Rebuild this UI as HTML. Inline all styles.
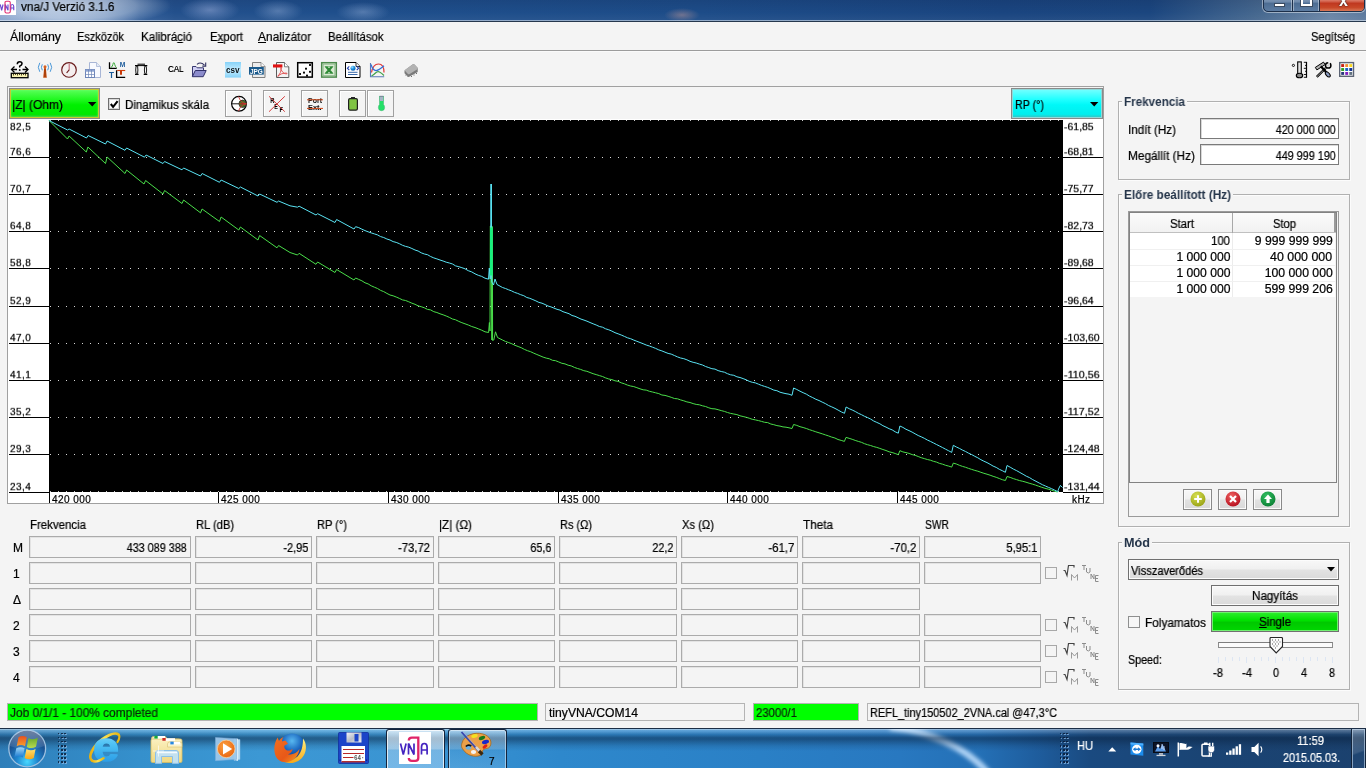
<!DOCTYPE html>
<html><head><meta charset="utf-8"><title>vna/J</title>
<style>
html,body{margin:0;padding:0;overflow:hidden;}body{width:1366px;height:768px;overflow:hidden;background:#f4f4f4;position:relative;font-family:"Liberation Sans",sans-serif;}
u{text-decoration:underline;text-underline-offset:1px;}
</style></head><body>
<div style="position:absolute;left:0px;top:0px;width:1366px;height:21px;background:linear-gradient(90deg,#8aa5cd 0px,#86a3cc 60px,#6286b8 105px,#305c98 140px,#23508c 175px,#1f4f8c 330px,#1d4c88 700px,#1a4580 1000px,#1b467f 1150px,#46688f 1260px,#6a85a6 1330px,#5d7a9e 1366px);"></div>
<div style="position:absolute;left:0px;top:0px;width:1366px;height:21px;background:linear-gradient(180deg,rgba(0,0,30,0.10),rgba(0,0,30,0) 60%,rgba(255,255,255,0.05));"></div>
<div style="position:absolute;left:-20px;top:-14px;width:190px;height:40px;background:radial-gradient(ellipse at center,rgba(255,255,255,0.50) 0%,rgba(255,255,255,0.32) 45%,rgba(255,255,255,0) 72%);"></div>
<div style="position:absolute;left:180px;top:-2px;width:60px;height:24px;background:radial-gradient(ellipse at center,rgba(150,170,215,0.55),rgba(150,170,215,0) 70%);"></div>
<div style="position:absolute;left:253px;top:0px;width:50px;height:22px;background:radial-gradient(ellipse at center,rgba(150,175,215,0.45),rgba(150,175,215,0) 70%);"></div>
<div style="position:absolute;left:336px;top:2px;width:54px;height:20px;background:radial-gradient(ellipse at center,rgba(150,175,215,0.45),rgba(150,175,215,0) 70%);"></div>
<div style="position:absolute;left:664px;top:8px;width:36px;height:14px;background:radial-gradient(ellipse at center,rgba(190,150,150,0.5),rgba(190,150,150,0) 70%);"></div>
<div style="position:absolute;left:0px;top:20px;width:1366px;height:1px;background:rgba(235,242,250,0.55);"></div>
<div style="position:absolute;left:0px;top:21px;width:1366px;height:1px;background:#26384e;"></div>
<div style="position:absolute;left:0px;top:0px;width:16px;height:14.7px;background:#fff;"></div>
<svg style="position:absolute;left:0;top:-0.8px" width="16" height="16" viewBox="0 0 32 32"><path d="M0.500 11l2.800 11.500 2.800-11.500M10.500 22.500v-11.500l5.500 11.500v-11.500M21.500 22.500v-7.500q0-4 3-4t3 4v7.500M21.500 18h6" fill="none" stroke="#6a48d0" stroke-width="2.300"/><path d="M10 7q0-2.500 3-2.500h4.500q3 0 3 2.500v18.500q0 2.500-3 2.500h-4.500q-3 0-3-2.500z" fill="none" stroke="#e02c70" stroke-width="2.200"/></svg>
<span id="t1" style='position:absolute;left:20.8px;top:0px;font:12px/15px "Liberation Sans",sans-serif;color:#000;white-space:nowrap;will-change:transform;transform-origin:left top;transform:scale(0.9791,1.000);-webkit-text-stroke:0.22px #000;'>vna/J Verzió 3.1.6</span>
<div style="position:absolute;left:1263px;top:-6px;width:102px;height:18px;border:1px solid #1c2f4a;border-radius:0 0 5px 5px;box-shadow:0 0 0 1px rgba(255,255,255,0.45);background:linear-gradient(180deg,#94a8c2,#6c88aa 45%,#4c6c92 50%,#5c7ca2);overflow:hidden;box-sizing:border-box;"></div>
<div style="position:absolute;left:1292px;top:-6px;width:1px;height:17px;background:#1c2f4a;box-shadow:1px 0 0 rgba(255,255,255,0.4),-1px 0 0 rgba(255,255,255,0.4);"></div>
<div style="position:absolute;left:1319px;top:-6px;width:1px;height:17px;background:#1c2f4a;box-shadow:-1px 0 0 rgba(255,255,255,0.4);"></div>
<div style="position:absolute;left:1320px;top:-6px;width:44px;height:17px;background:linear-gradient(180deg,#e8b0a0,#d8705c 40%,#c03820 55%,#c84828 80%,#d87858);border-radius:0 0 4px 0;"></div>
<div style="position:absolute;left:1273.5px;top:2.5px;width:11.5px;height:4px;background:#fff;border:1px solid #3a4a60;box-sizing:border-box;"></div>
<div style="position:absolute;left:1300.5px;top:-3px;width:11px;height:8.7px;border:2px solid #fff;outline:1px solid #3a4a60;box-sizing:border-box;"></div>
<span id="t2" style='position:absolute;left:1338.5px;top:-9px;font:bold 16px/19px "Liberation Sans",sans-serif;color:#fff;white-space:nowrap;will-change:transform;transform-origin:left top;transform:scale(1.0000,1.000);text-shadow:0 0 1px #3a2020,0 0 2px #3a2020;'>x</span>
<div style="position:absolute;left:0px;top:22px;width:1366px;height:28px;background:#f4f4f4;"></div>
<div style="position:absolute;left:0px;top:50px;width:1366px;height:1px;background:#9c9c9c;"></div>
<div style="position:absolute;left:0px;top:51px;width:1366px;height:1px;background:#fafafa;"></div>
<span id="t3" style='position:absolute;left:10px;top:30px;font:12px/15px "Liberation Sans",sans-serif;color:#000;white-space:nowrap;will-change:transform;transform-origin:left top;transform:scale(1.0332,1.000);-webkit-text-stroke:0.22px #000;'>Állomány</span>
<span id="t4" style='position:absolute;left:77px;top:30px;font:12px/15px "Liberation Sans",sans-serif;color:#000;white-space:nowrap;will-change:transform;transform-origin:left top;transform:scale(0.9151,1.000);-webkit-text-stroke:0.22px #000;'>Eszközök</span>
<span id="t5" style='position:absolute;left:140.5px;top:30px;font:12px/15px "Liberation Sans",sans-serif;color:#000;white-space:nowrap;will-change:transform;transform-origin:left top;transform:scale(0.9677,1.000);-webkit-text-stroke:0.22px #000;'>Kalibrá<u>c</u>ió</span>
<span id="t6" style='position:absolute;left:209.5px;top:30px;font:12px/15px "Liberation Sans",sans-serif;color:#000;white-space:nowrap;will-change:transform;transform-origin:left top;transform:scale(0.9509,1.000);-webkit-text-stroke:0.22px #000;'>E<u>x</u>port</span>
<span id="t7" style='position:absolute;left:258px;top:30px;font:12px/15px "Liberation Sans",sans-serif;color:#000;white-space:nowrap;will-change:transform;transform-origin:left top;transform:scale(0.9930,1.000);-webkit-text-stroke:0.22px #000;'><u>A</u>nalizátor</span>
<span id="t8" style='position:absolute;left:327.5px;top:30px;font:12px/15px "Liberation Sans",sans-serif;color:#000;white-space:nowrap;will-change:transform;transform-origin:left top;transform:scale(0.9454,1.000);-webkit-text-stroke:0.22px #000;'>Beállítások</span>
<span id="t9" style='position:absolute;left:1311px;top:30px;font:12px/15px "Liberation Sans",sans-serif;color:#000;white-space:nowrap;will-change:transform;transform-origin:left top;transform:scale(0.9288,1.000);-webkit-text-stroke:0.22px #000;'>Segítség</span>
<svg style="position:absolute;left:0;top:0;overflow:visible" width="1366" height="130" viewBox="0 0 1366 130"><path d="M11 70l9-9 8.500 9z" fill="#fafafa" opacity="0.800"/><path d="M12 69.500h5M22.500 69.500h5" stroke="#000" stroke-width="1.300"/><path d="M14.500 66.500l-3 3 3 3M25 66.500l3 3-3 3" stroke="#000" stroke-width="1.300" fill="none"/><path d="M17.300 64.200q0-2.400 2.400-2.400 2.300 0 2.300 1.900 0 1.300-2.300 2.400v1.300" stroke="#000" stroke-width="1.500" fill="none"/><rect x="18.900" y="69.200" width="1.600" height="1.700" fill="#000"/><rect x="11.300" y="73.300" width="16.700" height="4.400" fill="#f8f2b0" stroke="#000" stroke-width="1.300"/><path d="M13.500 73.500v2M15.500 73.500v1.500M17.500 73.500v2M19.500 73.500v1.500M21.500 73.500v2M23.500 73.500v1.500M25.500 73.500v2" stroke="#201800" stroke-width="0.800"/><path d="M44.200 67.500h1.600l1 10.200h-3.600z" fill="#c85010"/><circle cx="45" cy="66.800" r="1.500" fill="#d86020"/><path d="M45 69v8" stroke="#802800" stroke-width="0.700"/><path d="M42.300 64.300q-1.800 3 0 6M47.700 64.300q1.800 3 0 6" stroke="#4a98d8" stroke-width="1" fill="none"/><path d="M39.800 62.800q-3 4.500 0 9M50.200 62.800q3 4.500 0 9" stroke="#4a98d8" stroke-width="1" fill="none"/><circle cx="69" cy="69.900" r="7.300" fill="#f4eeee" stroke="#6a1c1c" stroke-width="1.150"/><path d="M69.200 63.500v6.400" stroke="#c06878" stroke-width="1.100"/><path d="M69.200 69.900l-2.600 3" stroke="#6a1c1c" stroke-width="1.100"/><path d="M89.500 62.500h7l4 4v11h-11z" fill="#f8faff" stroke="#a8b6d6" stroke-width="1"/><path d="M96.500 62.500v4h4" fill="#e4eaf6" stroke="#a8b6d6" stroke-width="0.800"/><rect x="85.500" y="69.500" width="9" height="8" fill="#fdfdff" stroke="#6f86b8" stroke-width="1"/><rect x="85.500" y="69.500" width="9" height="2.200" fill="#8ea4d2"/><path d="M88.500 69.500v8M91.500 69.500v8M85.500 74.500h9" stroke="#6f86b8" stroke-width="0.700"/><path d="M109.500 62.300v6h7.200" stroke="#000" stroke-width="1.300" fill="none"/><path d="M110.700 67.600q1.600-0.300 2.200-3.200 0.800-3.600 1.800 0 0.600 2.900 2 3.200" stroke="#38a838" stroke-width="1" fill="none"/><text x="119.700" y="66.700" font-family="Liberation Sans" font-size="6.800" font-weight="bold" fill="#1a5a9a" textLength="5.600" lengthAdjust="spacingAndGlyphs">M</text><text x="109" y="77.600" font-family="Liberation Sans" font-size="8.200" font-weight="bold" fill="#1a5a9a">T</text><path d="M116.600 70.200v7.200h8.600" stroke="#000" stroke-width="1.300" fill="none"/><path d="M117.200 70.500h8" stroke="#d04010" stroke-width="1.100"/><path d="M121 70.500v4.200" stroke="#c83808" stroke-width="2"/><path d="M137.500 64.200h7.500M136 65.600h10.500" stroke="#000" stroke-width="1"/><path d="M135 65.600h3.600M143.700 65.600h3.600M135 74.400h3.600M143.700 74.400h3.600" stroke="#000" stroke-width="1.200"/><ellipse cx="136.800" cy="70" rx="1.100" ry="4.200" fill="none" stroke="#000" stroke-width="0.900"/><ellipse cx="145.500" cy="70" rx="1.100" ry="4.200" fill="none" stroke="#000" stroke-width="0.900"/><path d="M192.500 76.500v-10h3.500l1.200 1.300h6.300v3" fill="#d0d0f4" stroke="#383870" stroke-width="1"/><path d="M192.300 76.700l3-6.200h10.900l-3 6.200z" fill="#8c8ccc" stroke="#303068" stroke-width="1"/><path d="M197 64.300q3.500-3 7.500 0.800" stroke="#303060" stroke-width="1.100" fill="none"/><path d="M205.700 62.500v3.600h-3.400" stroke="#303060" stroke-width="1.100" fill="none"/><defs><linearGradient id="csvg" x1="0" y1="0" x2="0" y2="1"><stop offset="0" stop-color="#86d2f8"/><stop offset="0.500" stop-color="#c4ecff"/><stop offset="1" stop-color="#86d2f8"/></linearGradient></defs><rect x="225" y="62" width="16" height="15.600" fill="url(#csvg)"/><text x="226" y="73.200" font-family="Liberation Sans" font-size="9.800" font-weight="bold" fill="#0c1418" textLength="13.600" lengthAdjust="spacingAndGlyphs">csv</text><path d="M252.500 62.500h8.500l4 4v11h-12.500z" fill="#ececec" stroke="#808080" stroke-width="1"/><path d="M261 62.500v4h4" fill="#fafafa" stroke="#808080" stroke-width="0.800"/><rect x="249" y="67" width="14.800" height="7.600" fill="#1a5a8c"/><text x="250" y="73.700" font-family="Liberation Sans" font-size="7.400" font-weight="bold" fill="#fff" textLength="12.800" lengthAdjust="spacingAndGlyphs">JPG</text><path d="M276.500 62.500h8l4.300 4.300v10.700h-12.300z" fill="#f4f4f4" stroke="#5c5c5c" stroke-width="1"/><path d="M284.500 62.500v4.300h4.300" fill="#fff" stroke="#5c5c5c" stroke-width="0.800"/><rect x="273" y="64.400" width="9.400" height="3.100" fill="#e01010"/><path d="M278 76.500q3.200-4 3.400-8.500 0.100-1.600-0.700-0.600-0.400 2 2.200 5 2 1.800 4 1.500 0.800-0.700-1-0.900-4.200 0-8 2.800z" stroke="#e05050" stroke-width="0.900" fill="none"/><rect x="297.700" y="62.700" width="14.600" height="14.400" fill="#fff" stroke="#000" stroke-width="1.500"/><rect x="309.05" y="64.05" width="1.900" height="1.900" fill="#000"/><rect x="305.05" y="67.75" width="1.900" height="1.900" fill="#000"/><rect x="309.05" y="70.85" width="1.900" height="1.900" fill="#000"/><rect x="303.05" y="71.65" width="1.900" height="1.900" fill="#000"/><rect x="299.05" y="73.05" width="1.900" height="1.900" fill="#000"/><rect x="306.05" y="74.65" width="1.900" height="1.900" fill="#000"/><rect x="321.700" y="62.700" width="14.600" height="14.400" fill="#dcecd4" stroke="#4c8a4c" stroke-width="1.500"/><rect x="323.200" y="64.200" width="11.600" height="11.400" fill="none" stroke="#8cb88c" stroke-width="0.800"/><path d="M324.500 66.500h3l6 7h-3zM330.500 66.500h3l-6 7h-3z" fill="#2e8a36"/><path d="M325 66.500h8M325 73.500h8" stroke="#2e8a36" stroke-width="0.700" opacity="0.700"/><path d="M345.500 62.500h10.500l4 4v11h-14.500z" fill="#fff" stroke="#000" stroke-width="1"/><path d="M356 62.500v4h4" fill="#f0f0f0" stroke="#000" stroke-width="0.800"/><defs><radialGradient id="glb" cx="0.350" cy="0.300" r="0.800"><stop offset="0" stop-color="#a0e0ff"/><stop offset="0.500" stop-color="#1890e0"/><stop offset="1" stop-color="#0c58a8"/></radialGradient></defs><circle cx="353" cy="68.200" r="2.500" fill="url(#glb)"/><path d="M349.300 66.300l-1.900 1.900 1.900 1.900M356.700 66.300l1.900 1.900-1.900 1.900" stroke="#2040b0" stroke-width="1.100" fill="none"/><path d="M348 72.300h9.500M348 74.500h9.500" stroke="#3a68a8" stroke-width="1"/><path d="M370.500 63v13.800h13.700" stroke="#5a7ab8" stroke-width="1.100" fill="none"/><path d="M371.500 72.500q1.500-8.500 7-8.500t5.500 8.500" stroke="#e03838" stroke-width="1.200" fill="none"/><path d="M371 64.500q2 6.100 5 6.100 2.500 0 8-4.800" stroke="#3070d8" stroke-width="1.200" fill="none"/><path d="M371.500 76q2-1 4-3t4-1 4.500 3.500" stroke="#40a048" stroke-width="1.200" fill="none"/><path d="M404.500 70.500l8-6q1-0.700 2 0l3.200 3.500q0.600 0.800 0 1.600v2.400l-8 4.600q-1 0.500-2-0.400l-3.200-3z" fill="#7a7a7a"/><path d="M404.500 70.300l8-5.800q1-0.700 2 0l3.200 3.300q0.600 0.800-0.300 1.400l-7.800 4.800q-1 0.600-1.900-0.300z" fill="#b2b2b2"/><path d="M406 74.500v1.200M408 76v1M411.500 76v1M414 74.500v1M416.500 73v1" stroke="#606060" stroke-width="0.900"/><circle cx="1293.400" cy="65.400" r="1.100" fill="none" stroke="#000" stroke-width="0.900"/><rect x="1297.700" y="61.900" width="3.600" height="12.500" fill="#e4e4e4" stroke="#000" stroke-width="1.100"/><ellipse cx="1299.500" cy="75.500" rx="3.200" ry="2.300" fill="#8c8c8c" stroke="#000" stroke-width="1.100"/><path d="M1306.500 61.900v15.800" stroke="#000" stroke-width="1.200"/><path d="M1303.800 62.300h2.700M1305 65.400h1.500M1303.800 68.300h2.700M1305 71.300h1.500M1303.800 74.500h2.700M1303.800 77.300h2.700" stroke="#000" stroke-width="0.900"/><path d="M1316.800 76.800l9-8.800" stroke="#000" stroke-width="2.400"/><path d="M1317 76.600l9-8.800" stroke="#c8c8c8" stroke-width="0.800"/><circle cx="1328.200" cy="65.400" r="2.700" fill="none" stroke="#000" stroke-width="1.500"/><path d="M1328.400 63.600l2.600-2.600" stroke="#f4f4f4" stroke-width="1.800"/><circle cx="1328.200" cy="65.400" r="1.200" fill="#d0d0d0"/><path d="M1315.300 67.400l8.200-5.300 1.600 2.500-8.200 5.300z" fill="#b4b4b4" stroke="#000" stroke-width="1"/><path d="M1320.800 66.300l8.200 9" stroke="#000" stroke-width="2.200"/><ellipse cx="1327.800" cy="74.400" rx="3.100" ry="1.700" fill="#8c9cc0" stroke="#000" stroke-width="1" transform="rotate(47 1327.800 74.400)"/><rect x="1339.700" y="62.600" width="13.800" height="13.700" fill="#fff" stroke="#5c6474" stroke-width="1.400"/><rect x="1341.2" y="64.1" width="2.900" height="2.900" fill="#c82010"/><rect x="1345.25" y="64.1" width="2.900" height="2.900" fill="#f09030"/><rect x="1349.3" y="64.1" width="2.900" height="2.900" fill="#f8d820"/><rect x="1341.2" y="68.05" width="2.900" height="2.900" fill="#30a020"/><rect x="1345.25" y="68.05" width="2.900" height="2.900" fill="#1060c0"/><rect x="1349.3" y="68.05" width="2.900" height="2.900" fill="#103090"/><rect x="1341.2" y="72" width="2.900" height="2.900" fill="#283878"/><rect x="1345.25" y="72" width="2.900" height="2.900" fill="#8020c0"/><rect x="1349.3" y="72" width="2.900" height="2.900" fill="#607080"/></svg>
<span id="t10" style='position:absolute;left:167.6px;top:63px;font:9px/12px "Liberation Sans",sans-serif;color:#000;white-space:nowrap;will-change:transform;transform-origin:left top;transform:scale(0.8906,1.000);text-shadow:0 0 0.3px #000;'>CAL</span>
<div style="position:absolute;left:7px;top:86px;width:1095px;height:416px;background:#fff;border:1px solid #a0a0a0;box-sizing:content-box;"></div>
<div style="position:absolute;left:8px;top:87px;width:1095px;height:32px;background:#f4f4f4;"></div>
<div style="position:absolute;left:49px;top:120px;width:1014px;height:372px;background:#000;"></div>
<svg style="position:absolute;left:0;top:0" width="1366" height="768" viewBox="0 0 1366 768"><line x1="50" y1="120.5" x2="1063" y2="120.5" stroke="#c8c8c8" stroke-width="1" stroke-dasharray="1 7"/><line x1="50" y1="157.5" x2="1063" y2="157.5" stroke="#d8d8d8" stroke-width="1" stroke-dasharray="1 7"/><line x1="50" y1="194.5" x2="1063" y2="194.5" stroke="#d8d8d8" stroke-width="1" stroke-dasharray="1 7"/><line x1="50" y1="231.5" x2="1063" y2="231.5" stroke="#d8d8d8" stroke-width="1" stroke-dasharray="1 7"/><line x1="50" y1="268.5" x2="1063" y2="268.5" stroke="#d8d8d8" stroke-width="1" stroke-dasharray="1 7"/><line x1="50" y1="306.5" x2="1063" y2="306.5" stroke="#d8d8d8" stroke-width="1" stroke-dasharray="1 7"/><line x1="50" y1="343.5" x2="1063" y2="343.5" stroke="#d8d8d8" stroke-width="1" stroke-dasharray="1 7"/><line x1="50" y1="380.5" x2="1063" y2="380.5" stroke="#d8d8d8" stroke-width="1" stroke-dasharray="1 7"/><line x1="50" y1="417.5" x2="1063" y2="417.5" stroke="#d8d8d8" stroke-width="1" stroke-dasharray="1 7"/><line x1="50" y1="454.5" x2="1063" y2="454.5" stroke="#d8d8d8" stroke-width="1" stroke-dasharray="1 7"/><line x1="50" y1="491.5" x2="1063" y2="491.5" stroke="#c8c8c8" stroke-width="1" stroke-dasharray="1 7"/><line x1="9" y1="157.5" x2="49" y2="157.5" stroke="#000" stroke-width="1"/><line x1="1063" y1="157.5" x2="1103" y2="157.5" stroke="#000" stroke-width="1"/><line x1="9" y1="194.5" x2="49" y2="194.5" stroke="#000" stroke-width="1"/><line x1="1063" y1="194.5" x2="1103" y2="194.5" stroke="#000" stroke-width="1"/><line x1="9" y1="231.5" x2="49" y2="231.5" stroke="#000" stroke-width="1"/><line x1="1063" y1="231.5" x2="1103" y2="231.5" stroke="#000" stroke-width="1"/><line x1="9" y1="268.5" x2="49" y2="268.5" stroke="#000" stroke-width="1"/><line x1="1063" y1="268.5" x2="1103" y2="268.5" stroke="#000" stroke-width="1"/><line x1="9" y1="306.5" x2="49" y2="306.5" stroke="#000" stroke-width="1"/><line x1="1063" y1="306.5" x2="1103" y2="306.5" stroke="#000" stroke-width="1"/><line x1="9" y1="343.5" x2="49" y2="343.5" stroke="#000" stroke-width="1"/><line x1="1063" y1="343.5" x2="1103" y2="343.5" stroke="#000" stroke-width="1"/><line x1="9" y1="380.5" x2="49" y2="380.5" stroke="#000" stroke-width="1"/><line x1="1063" y1="380.5" x2="1103" y2="380.5" stroke="#000" stroke-width="1"/><line x1="9" y1="417.5" x2="49" y2="417.5" stroke="#000" stroke-width="1"/><line x1="1063" y1="417.5" x2="1103" y2="417.5" stroke="#000" stroke-width="1"/><line x1="9" y1="454.5" x2="49" y2="454.5" stroke="#000" stroke-width="1"/><line x1="1063" y1="454.5" x2="1103" y2="454.5" stroke="#000" stroke-width="1"/><line x1="9" y1="492.5" x2="49" y2="492.5" stroke="#000" stroke-width="1"/><line x1="1063" y1="492.5" x2="1103" y2="492.5" stroke="#000" stroke-width="1"/><line x1="49.5" y1="492" x2="49.5" y2="503" stroke="#000" stroke-width="1"/><line x1="218.5" y1="492" x2="218.5" y2="503" stroke="#000" stroke-width="1"/><line x1="388.5" y1="492" x2="388.5" y2="503" stroke="#000" stroke-width="1"/><line x1="558.5" y1="492" x2="558.5" y2="503" stroke="#000" stroke-width="1"/><line x1="727.5" y1="492" x2="727.5" y2="503" stroke="#000" stroke-width="1"/><line x1="897.5" y1="492" x2="897.5" y2="503" stroke="#000" stroke-width="1"/><path d="M49.0 120.5 L67.5 139.0 L69.1 136.0 L86.3 152.0 L87.9 147.0 L105.5 163.5 L107.1 157.0 L125.0 173.5 L126.6 170.0 L144.0 184.0 L145.6 180.5 L163.0 194.0 L164.6 190.5 L182.0 203.5 L183.6 200.0 L200.5 212.8 L202.1 209.0 L219.5 221.5 L221.1 217.0 L238.8 230.0 L240.4 227.0 L258.0 240.0 L259.6 235.5 L277.0 247.8 L278.6 245.5 L290.0 252.5 L297.5 255.0 L299.1 253.3 L316.0 264.3 L317.6 262.0 L335.0 272.5 L336.6 269.5 L354.0 280.0 L355.6 278.0 L358.7 279.4 L361.9 280.8 L365.0 282.8 L368.1 283.9 L371.2 285.8 L374.4 287.2 L377.5 288.5 L380.6 290.4 L383.7 291.6 L386.9 293.4 L390.0 295.0 L393.1 295.8 L396.2 297.0 L399.4 298.4 L402.5 299.9 L405.6 300.5 L408.8 301.8 L411.9 303.2 L415.0 304.3 L418.1 305.8 L421.2 306.7 L424.4 307.8 L427.5 309.4 L430.6 309.9 L433.8 311.7 L436.9 312.5 L440.0 313.8 L443.1 314.8 L446.2 316.0 L449.4 317.4 L452.5 319.0 L455.6 319.8 L458.8 321.4 L461.9 322.7 L465.0 323.8 L468.3 325.0 L471.7 326.5 L475.0 327.5 L478.3 328.8 L481.7 330.2 L485.0 331.8 L488.6 332.5 L489.4 322.5 L490.0 331.0 L490.3 226.0 L490.8 226.0 L491.9 340.0 L492.3 226.5 L492.6 340.5 L493.8 340.0 L495.5 331.8 L497.5 337.5 L502.5 340.0 L505.6 341.5 L508.8 342.6 L511.9 343.8 L515.0 345.3 L518.1 346.5 L521.2 347.7 L524.4 349.4 L527.5 350.7 L530.6 351.7 L533.8 353.2 L536.9 354.5 L540.0 355.8 L543.1 357.1 L546.2 358.1 L549.4 358.8 L552.5 360.3 L555.6 360.7 L558.8 362.0 L561.9 363.3 L565.0 363.9 L568.1 365.2 L571.2 365.9 L574.4 367.4 L577.5 368.5 L580.6 369.4 L583.8 370.7 L586.9 371.3 L590.0 372.5 L593.1 373.7 L596.2 374.6 L599.4 375.6 L602.5 376.5 L605.6 377.9 L608.8 379.0 L611.9 379.6 L615.0 380.8 L618.1 381.3 L621.2 382.8 L624.4 383.8 L627.5 385.1 L630.6 386.0 L633.8 386.6 L636.9 387.7 L640.0 388.8 L643.1 389.8 L646.2 390.1 L649.4 391.3 L652.5 392.0 L655.6 392.8 L658.8 393.6 L661.9 395.0 L665.0 395.4 L668.1 396.3 L671.2 397.3 L674.4 398.5 L677.5 398.8 L680.6 399.9 L683.8 400.8 L686.9 401.9 L690.0 402.5 L693.1 403.6 L696.2 404.4 L699.4 404.8 L702.5 405.8 L705.6 406.5 L708.8 407.8 L711.9 408.7 L715.0 408.9 L718.1 409.7 L721.2 410.6 L724.4 411.4 L727.5 412.5 L730.6 413.4 L733.8 414.0 L736.9 414.6 L740.0 415.8 L743.1 416.5 L746.2 417.3 L749.2 418.2 L752.3 419.3 L755.4 419.9 L758.5 420.6 L761.5 421.4 L764.6 422.3 L767.7 422.6 L770.8 424.0 L773.8 424.7 L776.9 425.6 L780.0 426.1 L783.0 426.9 L786.0 427.2 L789.0 427.8 L792.0 428.5 L793.6 424.5 L796.8 425.4 L800.0 426.7 L803.1 427.5 L806.3 428.5 L809.5 429.7 L812.6 430.7 L815.8 431.8 L819.0 432.8 L822.2 433.8 L825.4 434.9 L828.5 435.9 L831.7 437.1 L834.9 438.0 L838.0 439.5 L841.2 440.4 L844.4 441.4 L846.0 437.4 L849.1 438.3 L852.2 439.3 L855.2 440.4 L858.3 441.4 L861.4 442.3 L864.5 443.7 L867.5 444.7 L870.6 445.5 L873.7 446.6 L876.8 447.4 L879.8 448.4 L882.9 449.5 L886.0 450.5 L889.1 451.8 L892.1 452.5 L895.2 453.5 L898.3 454.7 L899.9 450.7 L902.9 451.9 L906.0 452.6 L909.0 453.4 L912.1 454.6 L915.1 455.3 L918.2 456.5 L921.2 457.7 L924.3 458.6 L927.3 459.5 L930.4 460.2 L933.4 461.3 L936.5 462.1 L939.5 463.4 L942.6 464.2 L945.6 465.3 L948.7 466.1 L951.7 467.1 L953.3 463.1 L956.4 464.0 L959.4 465.3 L962.5 466.4 L965.6 467.3 L968.6 468.4 L971.7 469.4 L974.8 470.4 L977.8 471.2 L980.9 472.3 L983.9 473.3 L987.0 474.2 L990.1 475.2 L993.1 476.3 L996.2 477.3 L999.3 478.5 L1002.3 479.7 L1005.4 480.5 L1007.0 476.5 L1010.2 477.4 L1013.3 478.6 L1016.5 479.6 L1019.6 480.6 L1022.8 481.3 L1026.0 482.2 L1029.1 483.2 L1032.3 484.1 L1035.5 485.1 L1038.6 486.2 L1041.8 487.3 L1044.9 488.3 L1048.1 489.1 L1051.3 490.1 L1054.4 491.2 L1057.6 492.0" fill="none" stroke="#4ade4a" stroke-width="1" stroke-linejoin="round"/><path d="M49.0 120.5 L67.5 130.0 L69.1 129.0 L86.5 138.0 L88.1 135.5 L105.5 144.0 L107.1 141.0 L125.0 150.3 L126.6 148.0 L144.5 157.2 L146.1 155.0 L163.0 163.5 L164.6 161.5 L182.0 169.8 L183.6 168.0 L200.5 176.0 L202.1 173.5 L219.5 182.3 L221.1 180.0 L238.8 188.5 L240.4 187.0 L258.0 196.0 L259.6 194.0 L277.0 202.3 L278.6 201.0 L290.0 205.8 L297.5 207.2 L299.1 206.2 L316.0 215.0 L317.6 213.7 L335.0 222.5 L336.6 219.5 L354.0 229.0 L355.6 226.7 L358.7 227.6 L361.9 229.2 L365.0 230.6 L368.1 231.8 L371.2 232.9 L374.4 233.9 L377.5 234.9 L380.6 236.6 L383.7 237.5 L386.9 239.0 L390.0 240.0 L393.1 241.6 L396.2 242.4 L399.4 243.7 L402.5 245.3 L405.6 246.4 L408.8 247.2 L411.9 248.5 L415.0 250.0 L418.1 251.0 L421.2 252.8 L424.4 254.0 L427.5 254.7 L430.6 256.5 L433.8 257.9 L436.9 258.9 L440.0 260.0 L443.1 261.0 L446.2 262.2 L449.4 263.0 L452.5 264.0 L455.6 265.9 L458.8 266.7 L461.9 267.7 L465.0 268.8 L468.3 270.7 L471.7 271.9 L475.0 273.8 L478.3 275.3 L481.7 276.4 L485.0 278.2 L488.5 279.2 L489.3 268.0 L490.2 279.0 L490.9 240.0 L491.0 184.0 L491.1 240.0 L491.8 282.0 L493.5 285.0 L495.0 279.0 L497.0 284.5 L502.5 287.5 L505.5 288.5 L508.6 289.8 L511.6 290.9 L514.6 292.4 L517.7 293.4 L520.7 294.7 L523.8 295.7 L526.8 297.5 L529.8 298.3 L532.9 299.6 L535.9 300.9 L538.9 302.4 L542.0 303.2 L545.0 304.5 L548.0 306.0 L551.0 306.9 L554.0 308.1 L557.0 309.3 L560.0 310.1 L563.0 311.7 L566.0 312.7 L569.0 313.7 L572.0 315.5 L575.0 316.3 L578.0 317.7 L581.0 319.1 L584.0 320.1 L587.0 321.2 L590.0 322.5 L593.1 323.8 L596.2 325.0 L599.4 326.5 L602.5 327.2 L605.6 328.8 L608.8 329.8 L611.9 331.1 L615.0 332.7 L618.1 333.8 L621.2 335.0 L624.4 336.4 L627.5 337.8 L630.6 338.7 L633.8 340.1 L636.9 341.3 L640.0 342.5 L643.1 343.7 L646.2 345.0 L649.4 346.0 L652.5 347.2 L655.6 348.4 L658.8 349.9 L661.9 350.9 L665.0 352.2 L668.1 353.4 L671.2 354.1 L674.4 355.5 L677.5 356.9 L680.6 358.0 L683.8 358.7 L686.9 359.8 L690.0 361.3 L693.1 362.3 L696.2 363.0 L699.4 364.1 L702.5 365.0 L705.6 366.5 L708.8 367.6 L711.9 368.7 L715.0 369.1 L718.1 370.6 L721.2 371.5 L724.4 372.2 L727.5 373.7 L730.6 374.8 L733.8 375.3 L736.9 376.8 L740.0 377.5 L743.1 378.6 L746.2 379.8 L749.2 381.3 L752.3 382.3 L755.4 382.9 L758.5 384.2 L761.5 385.4 L764.6 386.4 L767.7 387.4 L770.8 388.7 L773.8 390.1 L776.9 390.7 L780.0 392.2 L783.0 393.0 L786.0 393.7 L789.0 394.2 L792.0 395.3 L793.6 388.0 L796.8 389.5 L800.0 391.2 L803.1 392.7 L806.3 394.1 L809.5 396.1 L812.7 397.6 L815.9 399.3 L819.0 400.5 L822.2 402.1 L825.4 403.6 L828.6 405.5 L831.8 406.9 L835.0 408.4 L838.1 410.1 L841.3 411.9 L844.5 413.3 L846.1 407.0 L849.2 408.7 L852.2 410.0 L855.3 411.5 L858.4 413.3 L861.5 414.7 L864.5 416.3 L867.6 417.6 L870.7 419.1 L873.7 421.0 L876.8 422.4 L879.9 423.8 L882.9 425.7 L886.0 427.1 L889.1 428.7 L892.2 429.9 L895.2 431.8 L898.3 433.2 L899.9 426.0 L902.9 427.4 L906.0 429.3 L909.0 430.6 L912.1 432.1 L915.1 433.8 L918.2 435.5 L921.2 436.8 L924.3 438.3 L927.3 440.0 L930.4 441.4 L933.4 442.9 L936.5 444.5 L939.5 446.0 L942.6 447.6 L945.6 449.2 L948.7 450.8 L951.7 452.4 L953.3 445.3 L956.4 447.0 L959.4 448.4 L962.5 450.1 L965.6 451.5 L968.6 453.2 L971.7 454.6 L974.8 456.3 L977.8 457.8 L980.9 459.7 L983.9 461.2 L987.0 462.6 L990.1 464.3 L993.1 466.1 L996.2 467.4 L999.3 469.3 L1002.3 470.7 L1005.4 472.3 L1007.0 465.5 L1010.2 467.2 L1013.4 469.1 L1016.7 470.7 L1019.9 472.5 L1023.1 474.3 L1026.3 476.2 L1029.5 477.6 L1032.7 479.6 L1036.0 481.3 L1039.2 483.0 L1042.4 484.7 L1045.4 486.0 L1048.5 487.4 L1051.5 488.6 L1054.6 490.1 L1057.6 491.6 L1059.0 488.0 L1060.4 485.4 L1062.5 487.5" fill="none" stroke="#5ae4f4" stroke-width="1" stroke-linejoin="round"/><rect x="491" y="184" width="1" height="44" fill="#58e0f0"/><rect x="490" y="227.5" width="2.7" height="48" fill="#18f080"/></svg>
<span id="t11" style='position:absolute;left:10px;top:120px;font:10px/13px "Liberation Sans",sans-serif;color:#000;white-space:nowrap;will-change:transform;transform-origin:left bottom;transform:scale(1.0000,0.930);-webkit-text-stroke:0.22px #000;letter-spacing:0.44px;'>82,5</span>
<span id="t12" style='position:absolute;left:1064px;top:120px;font:10px/13px "Liberation Sans",sans-serif;color:#000;white-space:nowrap;will-change:transform;transform-origin:left bottom;transform:scale(1.0437,0.930);-webkit-text-stroke:0.22px #000;'>-61,85</span>
<span id="t13" style='position:absolute;left:10px;top:145px;font:10px/13px "Liberation Sans",sans-serif;color:#000;white-space:nowrap;will-change:transform;transform-origin:left bottom;transform:scale(1.0000,0.930);-webkit-text-stroke:0.22px #000;letter-spacing:0.44px;'>76,6</span>
<span id="t14" style='position:absolute;left:1064px;top:145px;font:10px/13px "Liberation Sans",sans-serif;color:#000;white-space:nowrap;will-change:transform;transform-origin:left bottom;transform:scale(1.0437,0.930);-webkit-text-stroke:0.22px #000;'>-68,81</span>
<span id="t15" style='position:absolute;left:10px;top:182px;font:10px/13px "Liberation Sans",sans-serif;color:#000;white-space:nowrap;will-change:transform;transform-origin:left bottom;transform:scale(1.0000,0.930);-webkit-text-stroke:0.22px #000;letter-spacing:0.44px;'>70,7</span>
<span id="t16" style='position:absolute;left:1064px;top:182px;font:10px/13px "Liberation Sans",sans-serif;color:#000;white-space:nowrap;will-change:transform;transform-origin:left bottom;transform:scale(1.0437,0.930);-webkit-text-stroke:0.22px #000;'>-75,77</span>
<span id="t17" style='position:absolute;left:10px;top:219px;font:10px/13px "Liberation Sans",sans-serif;color:#000;white-space:nowrap;will-change:transform;transform-origin:left bottom;transform:scale(1.0000,0.930);-webkit-text-stroke:0.22px #000;letter-spacing:0.44px;'>64,8</span>
<span id="t18" style='position:absolute;left:1064px;top:219px;font:10px/13px "Liberation Sans",sans-serif;color:#000;white-space:nowrap;will-change:transform;transform-origin:left bottom;transform:scale(1.0437,0.930);-webkit-text-stroke:0.22px #000;'>-82,73</span>
<span id="t19" style='position:absolute;left:10px;top:256px;font:10px/13px "Liberation Sans",sans-serif;color:#000;white-space:nowrap;will-change:transform;transform-origin:left bottom;transform:scale(1.0000,0.930);-webkit-text-stroke:0.22px #000;letter-spacing:0.44px;'>58,8</span>
<span id="t20" style='position:absolute;left:1064px;top:256px;font:10px/13px "Liberation Sans",sans-serif;color:#000;white-space:nowrap;will-change:transform;transform-origin:left bottom;transform:scale(1.0437,0.930);-webkit-text-stroke:0.22px #000;'>-89,68</span>
<span id="t21" style='position:absolute;left:10px;top:294px;font:10px/13px "Liberation Sans",sans-serif;color:#000;white-space:nowrap;will-change:transform;transform-origin:left bottom;transform:scale(1.0000,0.930);-webkit-text-stroke:0.22px #000;letter-spacing:0.44px;'>52,9</span>
<span id="t22" style='position:absolute;left:1064px;top:294px;font:10px/13px "Liberation Sans",sans-serif;color:#000;white-space:nowrap;will-change:transform;transform-origin:left bottom;transform:scale(1.0437,0.930);-webkit-text-stroke:0.22px #000;'>-96,64</span>
<span id="t23" style='position:absolute;left:10px;top:331px;font:10px/13px "Liberation Sans",sans-serif;color:#000;white-space:nowrap;will-change:transform;transform-origin:left bottom;transform:scale(1.0000,0.930);-webkit-text-stroke:0.22px #000;letter-spacing:0.44px;'>47,0</span>
<span id="t24" style='position:absolute;left:1064px;top:331px;font:10px/13px "Liberation Sans",sans-serif;color:#000;white-space:nowrap;will-change:transform;transform-origin:left bottom;transform:scale(1.0495,0.930);-webkit-text-stroke:0.22px #000;'>-103,60</span>
<span id="t25" style='position:absolute;left:10px;top:368px;font:10px/13px "Liberation Sans",sans-serif;color:#000;white-space:nowrap;will-change:transform;transform-origin:left bottom;transform:scale(1.0000,0.930);-webkit-text-stroke:0.22px #000;letter-spacing:0.44px;'>41,1</span>
<span id="t26" style='position:absolute;left:1064px;top:368px;font:10px/13px "Liberation Sans",sans-serif;color:#000;white-space:nowrap;will-change:transform;transform-origin:left bottom;transform:scale(1.0727,0.930);-webkit-text-stroke:0.22px #000;'>-110,56</span>
<span id="t27" style='position:absolute;left:10px;top:405px;font:10px/13px "Liberation Sans",sans-serif;color:#000;white-space:nowrap;will-change:transform;transform-origin:left bottom;transform:scale(1.0000,0.930);-webkit-text-stroke:0.22px #000;letter-spacing:0.44px;'>35,2</span>
<span id="t28" style='position:absolute;left:1064px;top:405px;font:10px/13px "Liberation Sans",sans-serif;color:#000;white-space:nowrap;will-change:transform;transform-origin:left bottom;transform:scale(1.0727,0.930);-webkit-text-stroke:0.22px #000;'>-117,52</span>
<span id="t29" style='position:absolute;left:10px;top:442px;font:10px/13px "Liberation Sans",sans-serif;color:#000;white-space:nowrap;will-change:transform;transform-origin:left bottom;transform:scale(1.0000,0.930);-webkit-text-stroke:0.22px #000;letter-spacing:0.44px;'>29,3</span>
<span id="t30" style='position:absolute;left:1064px;top:442px;font:10px/13px "Liberation Sans",sans-serif;color:#000;white-space:nowrap;will-change:transform;transform-origin:left bottom;transform:scale(1.0495,0.930);-webkit-text-stroke:0.22px #000;'>-124,48</span>
<span id="t31" style='position:absolute;left:10px;top:480px;font:10px/13px "Liberation Sans",sans-serif;color:#000;white-space:nowrap;will-change:transform;transform-origin:left bottom;transform:scale(1.0000,0.930);-webkit-text-stroke:0.22px #000;letter-spacing:0.44px;'>23,4</span>
<span id="t32" style='position:absolute;left:1064px;top:480px;font:10px/13px "Liberation Sans",sans-serif;color:#000;white-space:nowrap;will-change:transform;transform-origin:left bottom;transform:scale(1.0495,0.930);-webkit-text-stroke:0.22px #000;'>-131,44</span>
<div style="position:absolute;left:51px;top:492px;width:60px;height:11px;overflow:hidden"><span id="t33" style='position:absolute;left:1px;top:1px;font:10px/13px "Liberation Sans",sans-serif;color:#000;white-space:nowrap;will-change:transform;transform-origin:left top;transform:scale(1.0000,1.000);-webkit-text-stroke:0.22px #000;letter-spacing:0.44px;'>420 000</span></div>
<div style="position:absolute;left:220px;top:492px;width:60px;height:11px;overflow:hidden"><span id="t34" style='position:absolute;left:1px;top:1px;font:10px/13px "Liberation Sans",sans-serif;color:#000;white-space:nowrap;will-change:transform;transform-origin:left top;transform:scale(1.0000,1.000);-webkit-text-stroke:0.22px #000;letter-spacing:0.44px;'>425 000</span></div>
<div style="position:absolute;left:390px;top:492px;width:60px;height:11px;overflow:hidden"><span id="t35" style='position:absolute;left:1px;top:1px;font:10px/13px "Liberation Sans",sans-serif;color:#000;white-space:nowrap;will-change:transform;transform-origin:left top;transform:scale(1.0000,1.000);-webkit-text-stroke:0.22px #000;letter-spacing:0.44px;'>430 000</span></div>
<div style="position:absolute;left:560px;top:492px;width:60px;height:11px;overflow:hidden"><span id="t36" style='position:absolute;left:1px;top:1px;font:10px/13px "Liberation Sans",sans-serif;color:#000;white-space:nowrap;will-change:transform;transform-origin:left top;transform:scale(1.0000,1.000);-webkit-text-stroke:0.22px #000;letter-spacing:0.44px;'>435 000</span></div>
<div style="position:absolute;left:729px;top:492px;width:60px;height:11px;overflow:hidden"><span id="t37" style='position:absolute;left:1px;top:1px;font:10px/13px "Liberation Sans",sans-serif;color:#000;white-space:nowrap;will-change:transform;transform-origin:left top;transform:scale(1.0000,1.000);-webkit-text-stroke:0.22px #000;letter-spacing:0.44px;'>440 000</span></div>
<div style="position:absolute;left:899px;top:492px;width:60px;height:11px;overflow:hidden"><span id="t38" style='position:absolute;left:1px;top:1px;font:10px/13px "Liberation Sans",sans-serif;color:#000;white-space:nowrap;will-change:transform;transform-origin:left top;transform:scale(1.0000,1.000);-webkit-text-stroke:0.22px #000;letter-spacing:0.44px;'>445 000</span></div>
<div style="position:absolute;left:1070px;top:492px;width:30px;height:11px;overflow:hidden"><span id="t39" style='position:absolute;left:2px;top:1px;font:10px/13px "Liberation Sans",sans-serif;color:#000;white-space:nowrap;will-change:transform;transform-origin:left top;transform:scale(1.0000,1.000);-webkit-text-stroke:0.22px #000;letter-spacing:0.44px;'>kHz</span></div>
<div style="position:absolute;left:9px;top:88px;width:91px;height:31px;border:1px solid #8a8a8a;box-sizing:border-box;background:#e8e8e8;"></div>
<div style="position:absolute;left:10px;top:89px;width:89px;height:29px;border:1px solid #c8c830;box-sizing:border-box;background:linear-gradient(180deg,#58ff58,#20f820 35%,#00f000 55%,#00e800 90%,#30c830);box-shadow:inset 0 0 2px rgba(120,255,120,0.9);"></div>
<span id="t40" style='position:absolute;left:11.5px;top:97px;font:13px/16px "Liberation Sans",sans-serif;color:#000;white-space:nowrap;will-change:transform;transform-origin:left top;transform:scale(0.9249,1.000);-webkit-text-stroke:0.22px #000;'>|Z| (Ohm)</span>
<svg style="position:absolute;left:87.500px;top:102px" width="9" height="5"><path d="M0 0h8.4L4.2 4.6z" fill="#000"/></svg>
<div style="position:absolute;left:108px;top:98px;width:12px;height:12px;border:1px solid #6e6e6e;box-sizing:border-box;background:#fff;box-shadow:inset 0 0 0 1px #d8d8d8;"></div>
<svg style="position:absolute;left:108px;top:98px" width="13" height="13"><path d="M2.8 6l2.3 2.800L9.600 3.200" fill="none" stroke="#000" stroke-width="2.100"/></svg>
<span id="t41" style='position:absolute;left:124.8px;top:98px;font:12px/15px "Liberation Sans",sans-serif;color:#000;white-space:nowrap;will-change:transform;transform-origin:left top;transform:scale(0.9612,1.000);-webkit-text-stroke:0.22px #000;'>Din<u>a</u>mikus skála</span>
<div style="position:absolute;left:225px;top:90px;width:27px;height:27px;border:1px solid #a0a0a0;box-sizing:border-box;box-shadow:inset 1px 1px 0 #fff;"></div>
<div style="position:absolute;left:263px;top:90px;width:27px;height:27px;border:1px solid #a0a0a0;box-sizing:border-box;box-shadow:inset 1px 1px 0 #fff;"></div>
<div style="position:absolute;left:301px;top:90px;width:27px;height:27px;border:1px solid #a0a0a0;box-sizing:border-box;box-shadow:inset 1px 1px 0 #fff;"></div>
<div style="position:absolute;left:339px;top:90px;width:27px;height:27px;border:1px solid #a0a0a0;box-sizing:border-box;box-shadow:inset 1px 1px 0 #fff;"></div>
<div style="position:absolute;left:367px;top:90px;width:27px;height:27px;border:1px solid #a0a0a0;box-sizing:border-box;box-shadow:inset 1px 1px 0 #fff;"></div>
<div style="position:absolute;left:1011px;top:88px;width:92px;height:31px;border:1px solid #8a8a8a;box-sizing:border-box;background:#e8e8e8;"></div>
<div style="position:absolute;left:1012px;top:89px;width:90px;height:29px;border:1px solid #90d8d8;box-sizing:border-box;background:linear-gradient(180deg,#70ffff,#20ffff 35%,#00f8f8 55%,#00eeee 90%,#30c8c8);"></div>
<span id="t42" style='position:absolute;left:1014.5px;top:98px;font:12px/15px "Liberation Sans",sans-serif;color:#000;white-space:nowrap;will-change:transform;transform-origin:left top;transform:scale(0.8902,1.000);-webkit-text-stroke:0.22px #000;'>RP (°)</span>
<svg style="position:absolute;left:1090px;top:102px" width="9" height="5"><path d="M0 0h8.4L4.2 4.6z" fill="#000"/></svg>
<svg style="position:absolute;left:0;top:0;overflow:visible" width="1366" height="130" viewBox="0 0 1366 130"><circle cx="239" cy="103.800" r="7.400" fill="#fff" stroke="#000" stroke-width="1.200"/><path d="M232 103.800h8" stroke="#000" stroke-width="0.900"/><circle cx="242.600" cy="103.800" r="3.700" fill="#4c7028" stroke="#202020" stroke-width="0.700"/><path d="M239.500 103.800h7" stroke="#c02020" stroke-width="1.100"/><path d="M246.300 103.800q-5.500-0.500-7.800-7.300M246.300 103.800q-5.500 0.500-7.800 7.300" stroke="#c83030" stroke-width="0.900" fill="none"/><text x="270.300" y="103" font-family="Liberation Sans" font-size="7.400" font-weight="bold" fill="#000" textLength="4.200" lengthAdjust="spacingAndGlyphs">R</text><text x="274.300" y="108.800" font-family="Liberation Sans" font-size="7" font-weight="bold" fill="#000" textLength="3.600" lengthAdjust="spacingAndGlyphs">E</text><text x="279.600" y="111.800" font-family="Liberation Sans" font-size="6.800" font-weight="bold" fill="#000" textLength="3.600" lengthAdjust="spacingAndGlyphs">F</text><path d="M269 111.700L284.800 96.300M269 96.300l15.800 15.400" stroke="#d02828" stroke-width="0.900"/><text x="308" y="102.500" font-family="Liberation Sans" font-size="7" font-weight="bold" fill="#101010" textLength="14" lengthAdjust="spacingAndGlyphs">Port</text><text x="308" y="110.400" font-family="Liberation Sans" font-size="7" font-weight="bold" fill="#101010" textLength="13.500" lengthAdjust="spacingAndGlyphs">Ext.</text><path d="M307 99.800h16M307 108.400h16" stroke="#d04818" stroke-width="1"/><rect x="351" y="97" width="4" height="2" fill="#282828"/><rect x="348.600" y="98.600" width="8.800" height="11.600" rx="1.400" fill="#80c444" stroke="#202020" stroke-width="1.200"/><path d="M379.500 96h4v8.500q1.100 1 1.100 3 0 3.200-3.100 3.200t-3.100-3.200q0-2 1.100-3z" fill="#24e068"/><rect x="379.500" y="96" width="4" height="5" fill="#a4b4c4"/><rect x="379.500" y="95.800" width="4" height="1.200" fill="#7c8c9c"/><path d="M379.500 96v8.500q-1.100 1-1.100 3 0 3.200 3.100 3.200t3.100-3.200q0-2-1.100-3V96" fill="none" stroke="#3cb070" stroke-width="0.500"/></svg>
<div style="position:absolute;left:1118px;top:101px;width:232px;height:79px;border:1px solid #b0b0b0;box-sizing:border-box;box-shadow:inset 1px 1px 0 #fcfcfc,1px 1px 0 #fcfcfc;"></div>
<div style="position:absolute;left:1122px;top:95px;width:64.5px;height:13px;background:#f4f4f4;"></div>
<span id="t43" style='position:absolute;left:1124px;top:95px;font:bold 12px/15px "Liberation Sans",sans-serif;color:#25354a;white-space:nowrap;will-change:transform;transform-origin:left top;transform:scale(0.9726,1.000);'>Frekvencia</span>
<span id="t44" style='position:absolute;left:1128px;top:123px;font:12px/15px "Liberation Sans",sans-serif;color:#000;white-space:nowrap;will-change:transform;transform-origin:left top;transform:scale(0.9728,1.000);-webkit-text-stroke:0.22px #000;'>Indít (Hz)</span>
<span id="t45" style='position:absolute;left:1128px;top:149px;font:12px/15px "Liberation Sans",sans-serif;color:#000;white-space:nowrap;will-change:transform;transform-origin:left top;transform:scale(0.9851,1.000);-webkit-text-stroke:0.22px #000;'>Megállít (Hz)</span>
<div style="position:absolute;left:1200px;top:118px;width:139px;height:21px;background:#fff;border:1px solid #7a7a7a;box-sizing:border-box;box-shadow:inset 1px 1px 0 #d8d8d8;"></div>
<div style="position:absolute;left:1200px;top:144px;width:139px;height:21px;background:#fff;border:1px solid #7a7a7a;box-sizing:border-box;box-shadow:inset 1px 1px 0 #d8d8d8;"></div>
<span id="t46" style='position:absolute;right:30.5px;top:123px;font:12px/15px "Liberation Sans",sans-serif;color:#000;white-space:nowrap;will-change:transform;transform-origin:right top;transform:scale(0.8991,1.000);-webkit-text-stroke:0.22px #000;'>420 000 000</span>
<span id="t47" style='position:absolute;right:30.5px;top:149px;font:12px/15px "Liberation Sans",sans-serif;color:#000;white-space:nowrap;will-change:transform;transform-origin:right top;transform:scale(0.8991,1.000);-webkit-text-stroke:0.22px #000;'>449 999 190</span>
<div style="position:absolute;left:1118px;top:194px;width:232px;height:333px;border:1px solid #b0b0b0;box-sizing:border-box;box-shadow:inset 1px 1px 0 #fcfcfc,1px 1px 0 #fcfcfc;"></div>
<div style="position:absolute;left:1122px;top:188px;width:110.5px;height:13px;background:#f4f4f4;"></div>
<span id="t48" style='position:absolute;left:1124px;top:188px;font:bold 12px/15px "Liberation Sans",sans-serif;color:#25354a;white-space:nowrap;will-change:transform;transform-origin:left top;transform:scale(0.9786,1.000);'>Előre beállított (Hz)</span>
<div style="position:absolute;left:1128px;top:211px;width:211px;height:306px;border:1px solid #9a9a9a;box-sizing:border-box;"></div>
<div style="position:absolute;left:1129px;top:212px;width:208px;height:271px;border:1px solid #828282;border-top-color:#828282;box-sizing:border-box;background:#f4f4f4;"></div>
<div style="position:absolute;left:1130px;top:213px;width:206px;height:20px;background:linear-gradient(180deg,#fbfbfb,#f1f1f1);border-bottom:1px solid #c0c0c0;box-sizing:border-box;"></div>
<div style="position:absolute;left:1232px;top:213px;width:1px;height:20px;background:#a8a8a8;"></div>
<div style="position:absolute;left:1334px;top:213px;width:2px;height:19px;background:#9a9a9a;"></div>
<span id="t49" style='position:absolute;left:1170px;top:217px;font:12px/15px "Liberation Sans",sans-serif;color:#000;white-space:nowrap;will-change:transform;transform-origin:left top;transform:scale(0.9470,1.000);-webkit-text-stroke:0.22px #000;'>Start</span>
<span id="t50" style='position:absolute;left:1273px;top:217px;font:12px/15px "Liberation Sans",sans-serif;color:#000;white-space:nowrap;will-change:transform;transform-origin:left top;transform:scale(0.9316,1.000);-webkit-text-stroke:0.22px #000;'>Stop</span>
<div style="position:absolute;left:1130px;top:232.5px;width:205px;height:64px;background:#fff;"></div>
<div style="position:absolute;left:1232px;top:233px;width:1px;height:64px;background:#ececec;"></div>
<span id="t51" style='position:absolute;right:136px;top:234px;font:12px/15px "Liberation Sans",sans-serif;color:#000;white-space:nowrap;will-change:transform;transform-origin:right top;transform:scale(0.9485,1.000);-webkit-text-stroke:0.22px #000;'>100</span>
<span id="t52" style='position:absolute;right:33.5px;top:234px;font:12px/15px "Liberation Sans",sans-serif;color:#000;white-space:nowrap;will-change:transform;transform-origin:right top;transform:scale(1.0163,1.000);-webkit-text-stroke:0.22px #000;'>9 999 999 999</span>
<div style="position:absolute;left:1130px;top:249px;width:205px;height:1px;background:#f0f0f0;"></div>
<span id="t53" style='position:absolute;right:136px;top:250px;font:12px/15px "Liberation Sans",sans-serif;color:#000;white-space:nowrap;will-change:transform;transform-origin:right top;transform:scale(1.0114,1.000);-webkit-text-stroke:0.22px #000;'>1 000 000</span>
<span id="t54" style='position:absolute;right:33.5px;top:250px;font:12px/15px "Liberation Sans",sans-serif;color:#000;white-space:nowrap;will-change:transform;transform-origin:right top;transform:scale(1.0323,1.000);-webkit-text-stroke:0.22px #000;'>40 000 000</span>
<div style="position:absolute;left:1130px;top:265px;width:205px;height:1px;background:#f0f0f0;"></div>
<span id="t55" style='position:absolute;right:136px;top:266px;font:12px/15px "Liberation Sans",sans-serif;color:#000;white-space:nowrap;will-change:transform;transform-origin:right top;transform:scale(1.0114,1.000);-webkit-text-stroke:0.22px #000;'>1 000 000</span>
<span id="t56" style='position:absolute;right:33.5px;top:266px;font:12px/15px "Liberation Sans",sans-serif;color:#000;white-space:nowrap;will-change:transform;transform-origin:right top;transform:scale(1.0190,1.000);-webkit-text-stroke:0.22px #000;'>100 000 000</span>
<div style="position:absolute;left:1130px;top:281px;width:205px;height:1px;background:#f0f0f0;"></div>
<span id="t57" style='position:absolute;right:136px;top:282px;font:12px/15px "Liberation Sans",sans-serif;color:#000;white-space:nowrap;will-change:transform;transform-origin:right top;transform:scale(1.0114,1.000);-webkit-text-stroke:0.22px #000;'>1 000 000</span>
<span id="t58" style='position:absolute;right:33.5px;top:282px;font:12px/15px "Liberation Sans",sans-serif;color:#000;white-space:nowrap;will-change:transform;transform-origin:right top;transform:scale(1.0190,1.000);-webkit-text-stroke:0.22px #000;'>599 999 206</span>
<div style="position:absolute;left:1183px;top:489px;width:29px;height:21px;border:1px solid #8a8a8a;box-sizing:border-box;background:linear-gradient(180deg,#f8f8f8,#f0f0f0 48%,#e2e2e2 52%,#d9d9d9);box-shadow:inset 0 0 0 1px #fbfbfb;"></div>
<svg style="position:absolute;left:1189.5px;top:491px" width="16" height="16" viewBox="0 0 16 16"><defs><radialGradient id="gy" cx="0.4" cy="0.3" r="0.8"><stop offset="0" stop-color="#d8e050"/><stop offset="1" stop-color="#929c10"/></radialGradient><radialGradient id="gr" cx="0.4" cy="0.3" r="0.8"><stop offset="0" stop-color="#f06060"/><stop offset="1" stop-color="#b00818"/></radialGradient><radialGradient id="gg" cx="0.4" cy="0.3" r="0.8"><stop offset="0" stop-color="#30c060"/><stop offset="1" stop-color="#087830"/></radialGradient></defs><circle cx="8" cy="8" r="7.5" fill="url(#gy)"/><path d="M8 4.2v7.6M4.2 8h7.6" stroke="#fff" stroke-width="2"/></svg>
<div style="position:absolute;left:1218px;top:489px;width:29px;height:21px;border:1px solid #8a8a8a;box-sizing:border-box;background:linear-gradient(180deg,#f8f8f8,#f0f0f0 48%,#e2e2e2 52%,#d9d9d9);box-shadow:inset 0 0 0 1px #fbfbfb;"></div>
<svg style="position:absolute;left:1224.5px;top:491px" width="16" height="16" viewBox="0 0 16 16"><defs><radialGradient id="gy" cx="0.4" cy="0.3" r="0.8"><stop offset="0" stop-color="#d8e050"/><stop offset="1" stop-color="#929c10"/></radialGradient><radialGradient id="gr" cx="0.4" cy="0.3" r="0.8"><stop offset="0" stop-color="#f06060"/><stop offset="1" stop-color="#b00818"/></radialGradient><radialGradient id="gg" cx="0.4" cy="0.3" r="0.8"><stop offset="0" stop-color="#30c060"/><stop offset="1" stop-color="#087830"/></radialGradient></defs><circle cx="8" cy="8" r="7.5" fill="url(#gr)"/><path d="M5 5l6 6M11 5l-6 6" stroke="#fff" stroke-width="2.2"/></svg>
<div style="position:absolute;left:1253px;top:489px;width:29px;height:21px;border:1px solid #8a8a8a;box-sizing:border-box;background:linear-gradient(180deg,#f8f8f8,#f0f0f0 48%,#e2e2e2 52%,#d9d9d9);box-shadow:inset 0 0 0 1px #fbfbfb;"></div>
<svg style="position:absolute;left:1259.5px;top:491px" width="16" height="16" viewBox="0 0 16 16"><defs><radialGradient id="gy" cx="0.4" cy="0.3" r="0.8"><stop offset="0" stop-color="#d8e050"/><stop offset="1" stop-color="#929c10"/></radialGradient><radialGradient id="gr" cx="0.4" cy="0.3" r="0.8"><stop offset="0" stop-color="#f06060"/><stop offset="1" stop-color="#b00818"/></radialGradient><radialGradient id="gg" cx="0.4" cy="0.3" r="0.8"><stop offset="0" stop-color="#30c060"/><stop offset="1" stop-color="#087830"/></radialGradient></defs><circle cx="8" cy="8" r="7.5" fill="url(#gg)"/><path d="M8 3.6L12 8H9.6v4H6.4V8H4z" fill="#fff"/></svg>
<div style="position:absolute;left:1118px;top:542px;width:232px;height:148px;border:1px solid #b0b0b0;box-sizing:border-box;box-shadow:inset 1px 1px 0 #fcfcfc,1px 1px 0 #fcfcfc;"></div>
<div style="position:absolute;left:1122px;top:536px;width:29.5px;height:13px;background:#f4f4f4;"></div>
<span id="t59" style='position:absolute;left:1124px;top:536px;font:bold 12px/15px "Liberation Sans",sans-serif;color:#25354a;white-space:nowrap;will-change:transform;transform-origin:left top;transform:scale(1.0545,1.000);'>Mód</span>
<div style="position:absolute;left:1128px;top:559px;width:211px;height:21px;border:1px solid #707070;box-sizing:border-box;background:linear-gradient(180deg,#f8f8f8,#f0f0f0 48%,#e3e3e3 52%,#dadada);box-shadow:inset 0 0 0 1px #fcfcfc;"></div>
<span id="t60" style='position:absolute;left:1131px;top:564px;font:12px/15px "Liberation Sans",sans-serif;color:#000;white-space:nowrap;will-change:transform;transform-origin:left top;transform:scale(0.9251,1.000);-webkit-text-stroke:0.22px #000;'>Visszaverődés</span>
<svg style="position:absolute;left:1327px;top:567px" width="9" height="5"><path d="M0 0h8L4 4.5z" fill="#000"/></svg>
<div style="position:absolute;left:1211px;top:585px;width:128px;height:21px;border:1px solid #707070;box-sizing:border-box;background:linear-gradient(180deg,#f8f8f8,#f0f0f0 48%,#e3e3e3 52%,#dadada);box-shadow:inset 0 0 0 1px #fcfcfc;"></div>
<span id="t61" style='position:absolute;left:1252px;top:589px;font:12px/15px "Liberation Sans",sans-serif;color:#000;white-space:nowrap;will-change:transform;transform-origin:left top;transform:scale(0.9713,1.000);-webkit-text-stroke:0.22px #000;'>Nagyítás</span>
<div style="position:absolute;left:1211px;top:611px;width:128px;height:21px;border:1px solid #707070;box-sizing:border-box;background:linear-gradient(180deg,#30ee30,#00e000 45%,#00c800 55%,#00d800);box-shadow:inset 0 0 0 1px #70f070;"></div>
<span id="t62" style='position:absolute;left:1259px;top:615px;font:12px/15px "Liberation Sans",sans-serif;color:#000;white-space:nowrap;will-change:transform;transform-origin:left top;transform:scale(0.9588,1.000);-webkit-text-stroke:0.22px #000;'><u>S</u>ingle</span>
<div style="position:absolute;left:1128px;top:616px;width:12px;height:12px;border:1px solid #8e8f8f;box-sizing:border-box;background:#f6f6f6;"></div>
<span id="t63" style='position:absolute;left:1145px;top:616px;font:12px/15px "Liberation Sans",sans-serif;color:#000;white-space:nowrap;will-change:transform;transform-origin:left top;transform:scale(0.9834,1.000);-webkit-text-stroke:0.22px #000;'>Folyamatos</span>
<span id="t64" style='position:absolute;left:1128px;top:653px;font:12px/15px "Liberation Sans",sans-serif;color:#000;white-space:nowrap;will-change:transform;transform-origin:left top;transform:scale(0.8936,1.000);-webkit-text-stroke:0.22px #000;'>Speed:</span>
<div style="position:absolute;left:1218px;top:642px;width:115px;height:6px;border:1px solid #8c8c8c;border-top:1.5px solid #7e7e7e;box-sizing:border-box;background:#fbfbfb;"></div>
<svg style="position:absolute;left:1269px;top:637px" width="15" height="17" viewBox="0 0 15 17"><path d="M1 1.5 Q1 0.5 2 0.5 L12.5 0.5 Q13.5 0.5 13.5 1.5 L13.5 9.5 L7.2 16 L1 9.5z" fill="#fcfcfc" stroke="#262626" stroke-width="1.1"/><path d="M3 3h1M6 3h1M9 3h1M4.5 5h1M7.5 5h1M10.5 5h1M3 7h1M6 7h1M9 7h1M4.5 9h1M7.5 9h1M6 11h1" stroke="#555" stroke-width="1"/></svg>
<div style="position:absolute;left:1218px;top:657px;width:1px;height:6px;background:#dde6f3;"></div>
<div style="position:absolute;left:1225px;top:657px;width:1px;height:4px;background:#dde6f3;"></div>
<div style="position:absolute;left:1232px;top:657px;width:1px;height:4px;background:#dde6f3;"></div>
<div style="position:absolute;left:1239px;top:657px;width:1px;height:4px;background:#dde6f3;"></div>
<div style="position:absolute;left:1246px;top:657px;width:1px;height:6px;background:#dde6f3;"></div>
<div style="position:absolute;left:1254px;top:657px;width:1px;height:4px;background:#dde6f3;"></div>
<div style="position:absolute;left:1261px;top:657px;width:1px;height:4px;background:#dde6f3;"></div>
<div style="position:absolute;left:1268px;top:657px;width:1px;height:4px;background:#dde6f3;"></div>
<div style="position:absolute;left:1275px;top:657px;width:1px;height:6px;background:#dde6f3;"></div>
<div style="position:absolute;left:1282px;top:657px;width:1px;height:4px;background:#dde6f3;"></div>
<div style="position:absolute;left:1289px;top:657px;width:1px;height:4px;background:#dde6f3;"></div>
<div style="position:absolute;left:1296px;top:657px;width:1px;height:4px;background:#dde6f3;"></div>
<div style="position:absolute;left:1303px;top:657px;width:1px;height:6px;background:#dde6f3;"></div>
<div style="position:absolute;left:1310px;top:657px;width:1px;height:4px;background:#dde6f3;"></div>
<div style="position:absolute;left:1317px;top:657px;width:1px;height:4px;background:#dde6f3;"></div>
<div style="position:absolute;left:1325px;top:657px;width:1px;height:4px;background:#dde6f3;"></div>
<div style="position:absolute;left:1332px;top:657px;width:1px;height:6px;background:#dde6f3;"></div>
<span id="t65" style='position:absolute;left:1213px;top:666px;font:12px/15px "Liberation Sans",sans-serif;color:#000;white-space:nowrap;will-change:transform;transform-origin:left top;transform:scale(0.9370,1.000);-webkit-text-stroke:0.22px #000;'>-8</span>
<span id="t66" style='position:absolute;left:1242px;top:666px;font:12px/15px "Liberation Sans",sans-serif;color:#000;white-space:nowrap;will-change:transform;transform-origin:left top;transform:scale(0.9370,1.000);-webkit-text-stroke:0.22px #000;'>-4</span>
<span id="t67" style='position:absolute;left:1272.5px;top:666px;font:12px/15px "Liberation Sans",sans-serif;color:#000;white-space:nowrap;will-change:transform;transform-origin:left top;transform:scale(0.8972,1.000);-webkit-text-stroke:0.22px #000;'>0</span>
<span id="t68" style='position:absolute;left:1300.5px;top:666px;font:12px/15px "Liberation Sans",sans-serif;color:#000;white-space:nowrap;will-change:transform;transform-origin:left top;transform:scale(0.8972,1.000);-webkit-text-stroke:0.22px #000;'>4</span>
<span id="t69" style='position:absolute;left:1328.5px;top:666px;font:12px/15px "Liberation Sans",sans-serif;color:#000;white-space:nowrap;will-change:transform;transform-origin:left top;transform:scale(0.8972,1.000);-webkit-text-stroke:0.22px #000;'>8</span>
<span id="t70" style='position:absolute;left:29.5px;top:518px;font:12px/15px "Liberation Sans",sans-serif;color:#000;white-space:nowrap;will-change:transform;transform-origin:left top;transform:scale(0.9542,1.000);-webkit-text-stroke:0.22px #000;'>Frekvencia</span>
<span id="t71" style='position:absolute;left:195.5px;top:518px;font:12px/15px "Liberation Sans",sans-serif;color:#000;white-space:nowrap;will-change:transform;transform-origin:left top;transform:scale(0.9290,1.000);-webkit-text-stroke:0.22px #000;'>RL (dB)</span>
<span id="t72" style='position:absolute;left:316.5px;top:518px;font:12px/15px "Liberation Sans",sans-serif;color:#000;white-space:nowrap;will-change:transform;transform-origin:left top;transform:scale(0.9209,1.000);-webkit-text-stroke:0.22px #000;'>RP (°)</span>
<span id="t73" style='position:absolute;left:438.5px;top:518px;font:12px/15px "Liberation Sans",sans-serif;color:#000;white-space:nowrap;will-change:transform;transform-origin:left top;transform:scale(0.9742,1.000);-webkit-text-stroke:0.22px #000;'>|Z| (Ω)</span>
<span id="t74" style='position:absolute;left:559.5px;top:518px;font:12px/15px "Liberation Sans",sans-serif;color:#000;white-space:nowrap;will-change:transform;transform-origin:left top;transform:scale(0.9151,1.000);-webkit-text-stroke:0.22px #000;'>Rs (Ω)</span>
<span id="t75" style='position:absolute;left:681.5px;top:518px;font:12px/15px "Liberation Sans",sans-serif;color:#000;white-space:nowrap;will-change:transform;transform-origin:left top;transform:scale(0.9326,1.000);-webkit-text-stroke:0.22px #000;'>Xs (Ω)</span>
<span id="t76" style='position:absolute;left:802.5px;top:518px;font:12px/15px "Liberation Sans",sans-serif;color:#000;white-space:nowrap;will-change:transform;transform-origin:left top;transform:scale(0.9776,1.000);-webkit-text-stroke:0.22px #000;'>Theta</span>
<span id="t77" style='position:absolute;left:924.5px;top:518px;font:12px/15px "Liberation Sans",sans-serif;color:#000;white-space:nowrap;will-change:transform;transform-origin:left top;transform:scale(0.8571,1.000);-webkit-text-stroke:0.22px #000;'>SWR</span>
<span id="t78" style='position:absolute;left:12.5px;top:541px;font:12px/15px "Liberation Sans",sans-serif;color:#000;white-space:nowrap;will-change:transform;transform-origin:left top;transform:scale(1.0000,1.000);-webkit-text-stroke:0.22px #000;'>M</span>
<div style="position:absolute;left:29px;top:536px;width:162px;height:22px;border:1px solid #ababab;box-sizing:border-box;box-shadow:inset 1px 1px 0 #e3e3e3;"></div>
<span id="t79" style='position:absolute;right:1179px;top:541px;font:12px/15px "Liberation Sans",sans-serif;color:#000;white-space:nowrap;will-change:transform;transform-origin:right top;transform:scale(0.8991,1.000);-webkit-text-stroke:0.22px #000;'>433 089 388</span>
<div style="position:absolute;left:195px;top:536px;width:117px;height:22px;border:1px solid #ababab;box-sizing:border-box;box-shadow:inset 1px 1px 0 #e3e3e3;"></div>
<span id="t80" style='position:absolute;right:1058px;top:541px;font:12px/15px "Liberation Sans",sans-serif;color:#000;white-space:nowrap;will-change:transform;transform-origin:right top;transform:scale(0.9138,1.000);-webkit-text-stroke:0.22px #000;'>-2,95</span>
<div style="position:absolute;left:316px;top:536px;width:118px;height:22px;border:1px solid #ababab;box-sizing:border-box;box-shadow:inset 1px 1px 0 #e3e3e3;"></div>
<span id="t81" style='position:absolute;right:936px;top:541px;font:12px/15px "Liberation Sans",sans-serif;color:#000;white-space:nowrap;will-change:transform;transform-origin:right top;transform:scale(0.9403,1.000);-webkit-text-stroke:0.22px #000;'>-73,72</span>
<div style="position:absolute;left:438px;top:536px;width:117px;height:22px;border:1px solid #ababab;box-sizing:border-box;box-shadow:inset 1px 1px 0 #e3e3e3;"></div>
<span id="t82" style='position:absolute;right:815px;top:541px;font:12px/15px "Liberation Sans",sans-serif;color:#000;white-space:nowrap;will-change:transform;transform-origin:right top;transform:scale(0.8990,1.000);-webkit-text-stroke:0.22px #000;'>65,6</span>
<div style="position:absolute;left:559px;top:536px;width:118px;height:22px;border:1px solid #ababab;box-sizing:border-box;box-shadow:inset 1px 1px 0 #e3e3e3;"></div>
<span id="t83" style='position:absolute;right:693px;top:541px;font:12px/15px "Liberation Sans",sans-serif;color:#000;white-space:nowrap;will-change:transform;transform-origin:right top;transform:scale(0.8990,1.000);-webkit-text-stroke:0.22px #000;'>22,2</span>
<div style="position:absolute;left:681px;top:536px;width:117px;height:22px;border:1px solid #ababab;box-sizing:border-box;box-shadow:inset 1px 1px 0 #e3e3e3;"></div>
<span id="t84" style='position:absolute;right:572px;top:541px;font:12px/15px "Liberation Sans",sans-serif;color:#000;white-space:nowrap;will-change:transform;transform-origin:right top;transform:scale(0.9503,1.000);-webkit-text-stroke:0.22px #000;'>-61,7</span>
<div style="position:absolute;left:802px;top:536px;width:118px;height:22px;border:1px solid #ababab;box-sizing:border-box;box-shadow:inset 1px 1px 0 #e3e3e3;"></div>
<span id="t85" style='position:absolute;right:450px;top:541px;font:12px/15px "Liberation Sans",sans-serif;color:#000;white-space:nowrap;will-change:transform;transform-origin:right top;transform:scale(0.9503,1.000);-webkit-text-stroke:0.22px #000;'>-70,2</span>
<div style="position:absolute;left:924px;top:536px;width:117px;height:22px;border:1px solid #ababab;box-sizing:border-box;box-shadow:inset 1px 1px 0 #e3e3e3;"></div>
<span id="t86" style='position:absolute;right:329px;top:541px;font:12px/15px "Liberation Sans",sans-serif;color:#000;white-space:nowrap;will-change:transform;transform-origin:right top;transform:scale(0.9288,1.000);-webkit-text-stroke:0.22px #000;'>5,95:1</span>
<span id="t87" style='position:absolute;left:13px;top:567px;font:12px/15px "Liberation Sans",sans-serif;color:#000;white-space:nowrap;will-change:transform;transform-origin:left top;transform:scale(1.0000,1.000);-webkit-text-stroke:0.22px #000;'>1</span>
<div style="position:absolute;left:29px;top:562px;width:162px;height:22px;border:1px solid #ababab;box-sizing:border-box;box-shadow:inset 1px 1px 0 #e3e3e3;"></div>
<div style="position:absolute;left:195px;top:562px;width:117px;height:22px;border:1px solid #ababab;box-sizing:border-box;box-shadow:inset 1px 1px 0 #e3e3e3;"></div>
<div style="position:absolute;left:316px;top:562px;width:118px;height:22px;border:1px solid #ababab;box-sizing:border-box;box-shadow:inset 1px 1px 0 #e3e3e3;"></div>
<div style="position:absolute;left:438px;top:562px;width:117px;height:22px;border:1px solid #ababab;box-sizing:border-box;box-shadow:inset 1px 1px 0 #e3e3e3;"></div>
<div style="position:absolute;left:559px;top:562px;width:118px;height:22px;border:1px solid #ababab;box-sizing:border-box;box-shadow:inset 1px 1px 0 #e3e3e3;"></div>
<div style="position:absolute;left:681px;top:562px;width:117px;height:22px;border:1px solid #ababab;box-sizing:border-box;box-shadow:inset 1px 1px 0 #e3e3e3;"></div>
<div style="position:absolute;left:802px;top:562px;width:118px;height:22px;border:1px solid #ababab;box-sizing:border-box;box-shadow:inset 1px 1px 0 #e3e3e3;"></div>
<div style="position:absolute;left:924px;top:562px;width:117px;height:22px;border:1px solid #ababab;box-sizing:border-box;box-shadow:inset 1px 1px 0 #e3e3e3;"></div>
<div style="position:absolute;left:1045px;top:567px;width:12px;height:12px;border:1px solid #a8a8a8;box-sizing:border-box;background:#f4f4f4;"></div>
<svg style="position:absolute;left:1061px;top:563px" width="40" height="20" viewBox="0 0 40 20"><path d="M2.5 7.5 L4 7.5 L6 12.5 L7.5 2.5 L13 2.5 L13 4.5" fill="none" stroke="#454545" stroke-width="1.2"/><path d="M10.5 17.5 L10.5 11.5 L13.5 15 L16.5 11.5 L16.5 17.5" fill="none" stroke="#9a9a9a" stroke-width="1"/><path d="M21 2.5 L25 2.5 M23 2.5 L23 7 M25.5 5 L25.5 9 Q27.3 11 29 9 L29 5 M30 16 L30 11 L33 16 L33 11 M37.5 12.5 L34.5 12.5 L34.5 18.5 L37.5 18.5 M34.5 15.5 L37 15.5" fill="none" stroke="#8c8c8c" stroke-width="1"/></svg>
<span id="t88" style='position:absolute;left:13px;top:593px;font:12px/15px "Liberation Sans",sans-serif;color:#000;white-space:nowrap;will-change:transform;transform-origin:left top;transform:scale(1.0000,1.000);-webkit-text-stroke:0.22px #000;'>Δ</span>
<div style="position:absolute;left:29px;top:588px;width:162px;height:22px;border:1px solid #ababab;box-sizing:border-box;box-shadow:inset 1px 1px 0 #e3e3e3;"></div>
<div style="position:absolute;left:195px;top:588px;width:117px;height:22px;border:1px solid #ababab;box-sizing:border-box;box-shadow:inset 1px 1px 0 #e3e3e3;"></div>
<div style="position:absolute;left:316px;top:588px;width:118px;height:22px;border:1px solid #ababab;box-sizing:border-box;box-shadow:inset 1px 1px 0 #e3e3e3;"></div>
<div style="position:absolute;left:438px;top:588px;width:117px;height:22px;border:1px solid #ababab;box-sizing:border-box;box-shadow:inset 1px 1px 0 #e3e3e3;"></div>
<div style="position:absolute;left:559px;top:588px;width:118px;height:22px;border:1px solid #ababab;box-sizing:border-box;box-shadow:inset 1px 1px 0 #e3e3e3;"></div>
<div style="position:absolute;left:681px;top:588px;width:117px;height:22px;border:1px solid #ababab;box-sizing:border-box;box-shadow:inset 1px 1px 0 #e3e3e3;"></div>
<div style="position:absolute;left:802px;top:588px;width:118px;height:22px;border:1px solid #ababab;box-sizing:border-box;box-shadow:inset 1px 1px 0 #e3e3e3;"></div>
<span id="t89" style='position:absolute;left:13px;top:619px;font:12px/15px "Liberation Sans",sans-serif;color:#000;white-space:nowrap;will-change:transform;transform-origin:left top;transform:scale(1.0000,1.000);-webkit-text-stroke:0.22px #000;'>2</span>
<div style="position:absolute;left:29px;top:614px;width:162px;height:22px;border:1px solid #ababab;box-sizing:border-box;box-shadow:inset 1px 1px 0 #e3e3e3;"></div>
<div style="position:absolute;left:195px;top:614px;width:117px;height:22px;border:1px solid #ababab;box-sizing:border-box;box-shadow:inset 1px 1px 0 #e3e3e3;"></div>
<div style="position:absolute;left:316px;top:614px;width:118px;height:22px;border:1px solid #ababab;box-sizing:border-box;box-shadow:inset 1px 1px 0 #e3e3e3;"></div>
<div style="position:absolute;left:438px;top:614px;width:117px;height:22px;border:1px solid #ababab;box-sizing:border-box;box-shadow:inset 1px 1px 0 #e3e3e3;"></div>
<div style="position:absolute;left:559px;top:614px;width:118px;height:22px;border:1px solid #ababab;box-sizing:border-box;box-shadow:inset 1px 1px 0 #e3e3e3;"></div>
<div style="position:absolute;left:681px;top:614px;width:117px;height:22px;border:1px solid #ababab;box-sizing:border-box;box-shadow:inset 1px 1px 0 #e3e3e3;"></div>
<div style="position:absolute;left:802px;top:614px;width:118px;height:22px;border:1px solid #ababab;box-sizing:border-box;box-shadow:inset 1px 1px 0 #e3e3e3;"></div>
<div style="position:absolute;left:924px;top:614px;width:117px;height:22px;border:1px solid #ababab;box-sizing:border-box;box-shadow:inset 1px 1px 0 #e3e3e3;"></div>
<div style="position:absolute;left:1045px;top:619px;width:12px;height:12px;border:1px solid #a8a8a8;box-sizing:border-box;background:#f4f4f4;"></div>
<svg style="position:absolute;left:1061px;top:615px" width="40" height="20" viewBox="0 0 40 20"><path d="M2.5 7.5 L4 7.5 L6 12.5 L7.5 2.5 L13 2.5 L13 4.5" fill="none" stroke="#454545" stroke-width="1.2"/><path d="M10.5 17.5 L10.5 11.5 L13.5 15 L16.5 11.5 L16.5 17.5" fill="none" stroke="#9a9a9a" stroke-width="1"/><path d="M21 2.5 L25 2.5 M23 2.5 L23 7 M25.5 5 L25.5 9 Q27.3 11 29 9 L29 5 M30 16 L30 11 L33 16 L33 11 M37.5 12.5 L34.5 12.5 L34.5 18.5 L37.5 18.5 M34.5 15.5 L37 15.5" fill="none" stroke="#8c8c8c" stroke-width="1"/></svg>
<span id="t90" style='position:absolute;left:13px;top:645px;font:12px/15px "Liberation Sans",sans-serif;color:#000;white-space:nowrap;will-change:transform;transform-origin:left top;transform:scale(1.0000,1.000);-webkit-text-stroke:0.22px #000;'>3</span>
<div style="position:absolute;left:29px;top:640px;width:162px;height:22px;border:1px solid #ababab;box-sizing:border-box;box-shadow:inset 1px 1px 0 #e3e3e3;"></div>
<div style="position:absolute;left:195px;top:640px;width:117px;height:22px;border:1px solid #ababab;box-sizing:border-box;box-shadow:inset 1px 1px 0 #e3e3e3;"></div>
<div style="position:absolute;left:316px;top:640px;width:118px;height:22px;border:1px solid #ababab;box-sizing:border-box;box-shadow:inset 1px 1px 0 #e3e3e3;"></div>
<div style="position:absolute;left:438px;top:640px;width:117px;height:22px;border:1px solid #ababab;box-sizing:border-box;box-shadow:inset 1px 1px 0 #e3e3e3;"></div>
<div style="position:absolute;left:559px;top:640px;width:118px;height:22px;border:1px solid #ababab;box-sizing:border-box;box-shadow:inset 1px 1px 0 #e3e3e3;"></div>
<div style="position:absolute;left:681px;top:640px;width:117px;height:22px;border:1px solid #ababab;box-sizing:border-box;box-shadow:inset 1px 1px 0 #e3e3e3;"></div>
<div style="position:absolute;left:802px;top:640px;width:118px;height:22px;border:1px solid #ababab;box-sizing:border-box;box-shadow:inset 1px 1px 0 #e3e3e3;"></div>
<div style="position:absolute;left:924px;top:640px;width:117px;height:22px;border:1px solid #ababab;box-sizing:border-box;box-shadow:inset 1px 1px 0 #e3e3e3;"></div>
<div style="position:absolute;left:1045px;top:645px;width:12px;height:12px;border:1px solid #a8a8a8;box-sizing:border-box;background:#f4f4f4;"></div>
<svg style="position:absolute;left:1061px;top:641px" width="40" height="20" viewBox="0 0 40 20"><path d="M2.5 7.5 L4 7.5 L6 12.5 L7.5 2.5 L13 2.5 L13 4.5" fill="none" stroke="#454545" stroke-width="1.2"/><path d="M10.5 17.5 L10.5 11.5 L13.5 15 L16.5 11.5 L16.5 17.5" fill="none" stroke="#9a9a9a" stroke-width="1"/><path d="M21 2.5 L25 2.5 M23 2.5 L23 7 M25.5 5 L25.5 9 Q27.3 11 29 9 L29 5 M30 16 L30 11 L33 16 L33 11 M37.5 12.5 L34.5 12.5 L34.5 18.5 L37.5 18.5 M34.5 15.5 L37 15.5" fill="none" stroke="#8c8c8c" stroke-width="1"/></svg>
<span id="t91" style='position:absolute;left:13px;top:671px;font:12px/15px "Liberation Sans",sans-serif;color:#000;white-space:nowrap;will-change:transform;transform-origin:left top;transform:scale(1.0000,1.000);-webkit-text-stroke:0.22px #000;'>4</span>
<div style="position:absolute;left:29px;top:666px;width:162px;height:22px;border:1px solid #ababab;box-sizing:border-box;box-shadow:inset 1px 1px 0 #e3e3e3;"></div>
<div style="position:absolute;left:195px;top:666px;width:117px;height:22px;border:1px solid #ababab;box-sizing:border-box;box-shadow:inset 1px 1px 0 #e3e3e3;"></div>
<div style="position:absolute;left:316px;top:666px;width:118px;height:22px;border:1px solid #ababab;box-sizing:border-box;box-shadow:inset 1px 1px 0 #e3e3e3;"></div>
<div style="position:absolute;left:438px;top:666px;width:117px;height:22px;border:1px solid #ababab;box-sizing:border-box;box-shadow:inset 1px 1px 0 #e3e3e3;"></div>
<div style="position:absolute;left:559px;top:666px;width:118px;height:22px;border:1px solid #ababab;box-sizing:border-box;box-shadow:inset 1px 1px 0 #e3e3e3;"></div>
<div style="position:absolute;left:681px;top:666px;width:117px;height:22px;border:1px solid #ababab;box-sizing:border-box;box-shadow:inset 1px 1px 0 #e3e3e3;"></div>
<div style="position:absolute;left:802px;top:666px;width:118px;height:22px;border:1px solid #ababab;box-sizing:border-box;box-shadow:inset 1px 1px 0 #e3e3e3;"></div>
<div style="position:absolute;left:924px;top:666px;width:117px;height:22px;border:1px solid #ababab;box-sizing:border-box;box-shadow:inset 1px 1px 0 #e3e3e3;"></div>
<div style="position:absolute;left:1045px;top:671px;width:12px;height:12px;border:1px solid #a8a8a8;box-sizing:border-box;background:#f4f4f4;"></div>
<svg style="position:absolute;left:1061px;top:667px" width="40" height="20" viewBox="0 0 40 20"><path d="M2.5 7.5 L4 7.5 L6 12.5 L7.5 2.5 L13 2.5 L13 4.5" fill="none" stroke="#454545" stroke-width="1.2"/><path d="M10.5 17.5 L10.5 11.5 L13.5 15 L16.5 11.5 L16.5 17.5" fill="none" stroke="#9a9a9a" stroke-width="1"/><path d="M21 2.5 L25 2.5 M23 2.5 L23 7 M25.5 5 L25.5 9 Q27.3 11 29 9 L29 5 M30 16 L30 11 L33 16 L33 11 M37.5 12.5 L34.5 12.5 L34.5 18.5 L37.5 18.5 M34.5 15.5 L37 15.5" fill="none" stroke="#8c8c8c" stroke-width="1"/></svg>
<div style="position:absolute;left:7px;top:703px;width:531px;height:18px;border:1px solid #b4b4b4;box-sizing:border-box;background:#00ff00;"></div>
<div style="position:absolute;left:545px;top:703px;width:200px;height:18px;border:1px solid #b4b4b4;box-sizing:border-box;"></div>
<div style="position:absolute;left:753px;top:703px;width:106px;height:18px;border:1px solid #b4b4b4;box-sizing:border-box;background:#00ff00;"></div>
<div style="position:absolute;left:867px;top:703px;width:492px;height:18px;border:1px solid #b4b4b4;box-sizing:border-box;"></div>
<span id="t92" style='position:absolute;left:10px;top:706px;font:12px/15px "Liberation Sans",sans-serif;color:#0a260a;white-space:nowrap;will-change:transform;transform-origin:left top;transform:scale(0.9904,1.000);-webkit-text-stroke:0.22px #0a260a;'>Job 0/1/1 - 100% completed</span>
<span id="t93" style='position:absolute;left:549px;top:706px;font:12px/15px "Liberation Sans",sans-serif;color:#000;white-space:nowrap;will-change:transform;transform-origin:left top;transform:scale(1.0110,1.000);-webkit-text-stroke:0.22px #000;'>tinyVNA/COM14</span>
<span id="t94" style='position:absolute;left:756px;top:706px;font:12px/15px "Liberation Sans",sans-serif;color:#0a260a;white-space:nowrap;will-change:transform;transform-origin:left top;transform:scale(0.9449,1.000);-webkit-text-stroke:0.22px #0a260a;'>23000/1</span>
<span id="t95" style='position:absolute;left:870px;top:706px;font:12px/15px "Liberation Sans",sans-serif;color:#000;white-space:nowrap;will-change:transform;transform-origin:left top;transform:scale(0.9117,1.000);-webkit-text-stroke:0.22px #000;'>REFL_tiny150502_2VNA.cal @47,3°C</span>
<div style="position:absolute;left:0px;top:721px;width:1366px;height:7px;background:#f4f4f4;"></div>
<div style="position:absolute;left:0px;top:728px;width:1366px;height:40px;background:linear-gradient(90deg,#2f7fba 0px,#3590cc 140px,#3c98d4 260px,#3a94d2 420px,#2e88cc 560px,#2a80c6 760px,#2878c0 900px,#2470b6 980px,#1e5c9c 1040px,#1a4a80 1090px,#1a4474 1200px,#1b416e 1366px);"></div>
<svg style="position:absolute;left:860px;top:729px" width="240" height="39" viewBox="0 0 240 39"><defs><filter id="bl" x="-20%" y="-50%" width="140%" height="200%"><feGaussianBlur stdDeviation="2.2"/></filter></defs><path d="M30 -2 Q95 6 128 44" fill="none" stroke="rgba(185,218,250,0.95)" stroke-width="6.5" filter="url(#bl)"/></svg>
<div style="position:absolute;left:0px;top:728px;width:1366px;height:40px;background:linear-gradient(180deg,rgba(255,255,255,0.34) 0px,rgba(235,245,255,0.24) 3px,rgba(40,70,100,0.22) 6.5px,rgba(10,35,65,0.46) 9.5px,rgba(10,35,65,0.50) 11px,rgba(10,35,65,0.34) 14px,rgba(10,35,65,0.14) 18px,rgba(10,35,65,0) 23px,rgba(10,35,65,0) 40px);"></div>
<div style="position:absolute;left:0px;top:728px;width:1366px;height:1px;background:#1c2e46;"></div>
<div style="position:absolute;left:0px;top:729px;width:1366px;height:1px;background:rgba(255,255,255,0.30);"></div>
<svg style="position:absolute;left:7px;top:729px" width="42" height="39" viewBox="0 0 42 39"><defs><radialGradient id="orb" cx="0.500" cy="0.860" r="0.800"><stop offset="0" stop-color="#48d8ff"/><stop offset="0.350" stop-color="#2088d0"/><stop offset="0.700" stop-color="#1a5596"/><stop offset="1" stop-color="#183a70"/></radialGradient><linearGradient id="orbh" x1="0" y1="0" x2="0" y2="1"><stop offset="0" stop-color="rgba(255,255,255,0.800)"/><stop offset="1" stop-color="rgba(255,255,255,0.150)"/></linearGradient><linearGradient id="fr" x1="0" y1="0" x2="0" y2="1"><stop offset="0" stop-color="#e8501c"/><stop offset="1" stop-color="#f8a030"/></linearGradient><linearGradient id="fg" x1="0" y1="0" x2="0" y2="1"><stop offset="0" stop-color="#6aa82c"/><stop offset="1" stop-color="#b8dc50"/></linearGradient><linearGradient id="fb" x1="0" y1="0" x2="0" y2="1"><stop offset="0" stop-color="#a0d8f8"/><stop offset="1" stop-color="#1878d0"/></linearGradient><linearGradient id="fy" x1="0" y1="0" x2="0" y2="1"><stop offset="0" stop-color="#ffe070"/><stop offset="1" stop-color="#f8a818"/></linearGradient></defs><circle cx="20.200" cy="19.400" r="18.400" fill="url(#orb)" stroke="#9cc0e0" stroke-width="1.300"/><path d="M2.800 17 A17.500 17.500 0 0 1 37.600 17 Q20.200 24 2.800 17z" fill="url(#orbh)" opacity="0.480"/><path d="M11.500 8.200 Q15.500 5.600 19.800 8.300 L18 17.200 Q14 14.900 9.700 17.300z" fill="url(#fr)"/><path d="M21.500 9 Q25.800 11.500 30.800 8.800 L29 17.800 Q24.500 20.300 19.800 17.900z" fill="url(#fg)"/><path d="M9.300 19.300 Q13.500 17 17.600 19.300 L15.800 28.400 Q11.800 26 7.400 28.300z" fill="url(#fb)"/><path d="M19.400 20 Q24 22.500 28.600 20 L26.800 29 Q22.300 31.500 17.600 29z" fill="url(#fy)"/></svg>
<div style="position:absolute;left:58px;top:733px;width:1.4px;height:1.4px;background:rgba(10,25,50,0.800);box-shadow:0.9px 0.9px 0 rgba(140,185,230,0.850);"></div><div style="position:absolute;left:61.2px;top:733px;width:1.4px;height:1.4px;background:rgba(10,25,50,0.800);box-shadow:0.9px 0.9px 0 rgba(140,185,230,0.850);"></div><div style="position:absolute;left:64.4px;top:733px;width:1.4px;height:1.4px;background:rgba(10,25,50,0.800);box-shadow:0.9px 0.9px 0 rgba(140,185,230,0.850);"></div><div style="position:absolute;left:58px;top:737.05px;width:1.4px;height:1.4px;background:rgba(10,25,50,0.800);box-shadow:0.9px 0.9px 0 rgba(140,185,230,0.850);"></div><div style="position:absolute;left:61.2px;top:737.05px;width:1.4px;height:1.4px;background:rgba(10,25,50,0.800);box-shadow:0.9px 0.9px 0 rgba(140,185,230,0.850);"></div><div style="position:absolute;left:64.4px;top:737.05px;width:1.4px;height:1.4px;background:rgba(10,25,50,0.800);box-shadow:0.9px 0.9px 0 rgba(140,185,230,0.850);"></div><div style="position:absolute;left:58px;top:741.1px;width:1.4px;height:1.4px;background:rgba(10,25,50,0.800);box-shadow:0.9px 0.9px 0 rgba(140,185,230,0.850);"></div><div style="position:absolute;left:61.2px;top:741.1px;width:1.4px;height:1.4px;background:rgba(10,25,50,0.800);box-shadow:0.9px 0.9px 0 rgba(140,185,230,0.850);"></div><div style="position:absolute;left:64.4px;top:741.1px;width:1.4px;height:1.4px;background:rgba(10,25,50,0.800);box-shadow:0.9px 0.9px 0 rgba(140,185,230,0.850);"></div><div style="position:absolute;left:58px;top:745.15px;width:1.4px;height:1.4px;background:rgba(10,25,50,0.800);box-shadow:0.9px 0.9px 0 rgba(140,185,230,0.850);"></div><div style="position:absolute;left:61.2px;top:745.15px;width:1.4px;height:1.4px;background:rgba(10,25,50,0.800);box-shadow:0.9px 0.9px 0 rgba(140,185,230,0.850);"></div><div style="position:absolute;left:64.4px;top:745.15px;width:1.4px;height:1.4px;background:rgba(10,25,50,0.800);box-shadow:0.9px 0.9px 0 rgba(140,185,230,0.850);"></div><div style="position:absolute;left:58px;top:749.2px;width:1.4px;height:1.4px;background:rgba(10,25,50,0.800);box-shadow:0.9px 0.9px 0 rgba(140,185,230,0.850);"></div><div style="position:absolute;left:61.2px;top:749.2px;width:1.4px;height:1.4px;background:rgba(10,25,50,0.800);box-shadow:0.9px 0.9px 0 rgba(140,185,230,0.850);"></div><div style="position:absolute;left:64.4px;top:749.2px;width:1.4px;height:1.4px;background:rgba(10,25,50,0.800);box-shadow:0.9px 0.9px 0 rgba(140,185,230,0.850);"></div><div style="position:absolute;left:58px;top:753.25px;width:1.4px;height:1.4px;background:rgba(10,25,50,0.800);box-shadow:0.9px 0.9px 0 rgba(140,185,230,0.850);"></div><div style="position:absolute;left:61.2px;top:753.25px;width:1.4px;height:1.4px;background:rgba(10,25,50,0.800);box-shadow:0.9px 0.9px 0 rgba(140,185,230,0.850);"></div><div style="position:absolute;left:64.4px;top:753.25px;width:1.4px;height:1.4px;background:rgba(10,25,50,0.800);box-shadow:0.9px 0.9px 0 rgba(140,185,230,0.850);"></div><div style="position:absolute;left:58px;top:757.3px;width:1.4px;height:1.4px;background:rgba(10,25,50,0.800);box-shadow:0.9px 0.9px 0 rgba(140,185,230,0.850);"></div><div style="position:absolute;left:61.2px;top:757.3px;width:1.4px;height:1.4px;background:rgba(10,25,50,0.800);box-shadow:0.9px 0.9px 0 rgba(140,185,230,0.850);"></div><div style="position:absolute;left:64.4px;top:757.3px;width:1.4px;height:1.4px;background:rgba(10,25,50,0.800);box-shadow:0.9px 0.9px 0 rgba(140,185,230,0.850);"></div><div style="position:absolute;left:58px;top:761.35px;width:1.4px;height:1.4px;background:rgba(10,25,50,0.800);box-shadow:0.9px 0.9px 0 rgba(140,185,230,0.850);"></div><div style="position:absolute;left:61.2px;top:761.35px;width:1.4px;height:1.4px;background:rgba(10,25,50,0.800);box-shadow:0.9px 0.9px 0 rgba(140,185,230,0.850);"></div><div style="position:absolute;left:64.4px;top:761.35px;width:1.4px;height:1.4px;background:rgba(10,25,50,0.800);box-shadow:0.9px 0.9px 0 rgba(140,185,230,0.850);"></div>
<div style="position:absolute;left:1060px;top:733px;width:1.4px;height:1.4px;background:rgba(10,25,50,0.800);box-shadow:0.9px 0.9px 0 rgba(140,185,230,0.850);"></div><div style="position:absolute;left:1063.2px;top:733px;width:1.4px;height:1.4px;background:rgba(10,25,50,0.800);box-shadow:0.9px 0.9px 0 rgba(140,185,230,0.850);"></div><div style="position:absolute;left:1066.4px;top:733px;width:1.4px;height:1.4px;background:rgba(10,25,50,0.800);box-shadow:0.9px 0.9px 0 rgba(140,185,230,0.850);"></div><div style="position:absolute;left:1060px;top:737.05px;width:1.4px;height:1.4px;background:rgba(10,25,50,0.800);box-shadow:0.9px 0.9px 0 rgba(140,185,230,0.850);"></div><div style="position:absolute;left:1063.2px;top:737.05px;width:1.4px;height:1.4px;background:rgba(10,25,50,0.800);box-shadow:0.9px 0.9px 0 rgba(140,185,230,0.850);"></div><div style="position:absolute;left:1066.4px;top:737.05px;width:1.4px;height:1.4px;background:rgba(10,25,50,0.800);box-shadow:0.9px 0.9px 0 rgba(140,185,230,0.850);"></div><div style="position:absolute;left:1060px;top:741.1px;width:1.4px;height:1.4px;background:rgba(10,25,50,0.800);box-shadow:0.9px 0.9px 0 rgba(140,185,230,0.850);"></div><div style="position:absolute;left:1063.2px;top:741.1px;width:1.4px;height:1.4px;background:rgba(10,25,50,0.800);box-shadow:0.9px 0.9px 0 rgba(140,185,230,0.850);"></div><div style="position:absolute;left:1066.4px;top:741.1px;width:1.4px;height:1.4px;background:rgba(10,25,50,0.800);box-shadow:0.9px 0.9px 0 rgba(140,185,230,0.850);"></div><div style="position:absolute;left:1060px;top:745.15px;width:1.4px;height:1.4px;background:rgba(10,25,50,0.800);box-shadow:0.9px 0.9px 0 rgba(140,185,230,0.850);"></div><div style="position:absolute;left:1063.2px;top:745.15px;width:1.4px;height:1.4px;background:rgba(10,25,50,0.800);box-shadow:0.9px 0.9px 0 rgba(140,185,230,0.850);"></div><div style="position:absolute;left:1066.4px;top:745.15px;width:1.4px;height:1.4px;background:rgba(10,25,50,0.800);box-shadow:0.9px 0.9px 0 rgba(140,185,230,0.850);"></div><div style="position:absolute;left:1060px;top:749.2px;width:1.4px;height:1.4px;background:rgba(10,25,50,0.800);box-shadow:0.9px 0.9px 0 rgba(140,185,230,0.850);"></div><div style="position:absolute;left:1063.2px;top:749.2px;width:1.4px;height:1.4px;background:rgba(10,25,50,0.800);box-shadow:0.9px 0.9px 0 rgba(140,185,230,0.850);"></div><div style="position:absolute;left:1066.4px;top:749.2px;width:1.4px;height:1.4px;background:rgba(10,25,50,0.800);box-shadow:0.9px 0.9px 0 rgba(140,185,230,0.850);"></div><div style="position:absolute;left:1060px;top:753.25px;width:1.4px;height:1.4px;background:rgba(10,25,50,0.800);box-shadow:0.9px 0.9px 0 rgba(140,185,230,0.850);"></div><div style="position:absolute;left:1063.2px;top:753.25px;width:1.4px;height:1.4px;background:rgba(10,25,50,0.800);box-shadow:0.9px 0.9px 0 rgba(140,185,230,0.850);"></div><div style="position:absolute;left:1066.4px;top:753.25px;width:1.4px;height:1.4px;background:rgba(10,25,50,0.800);box-shadow:0.9px 0.9px 0 rgba(140,185,230,0.850);"></div><div style="position:absolute;left:1060px;top:757.3px;width:1.4px;height:1.4px;background:rgba(10,25,50,0.800);box-shadow:0.9px 0.9px 0 rgba(140,185,230,0.850);"></div><div style="position:absolute;left:1063.2px;top:757.3px;width:1.4px;height:1.4px;background:rgba(10,25,50,0.800);box-shadow:0.9px 0.9px 0 rgba(140,185,230,0.850);"></div><div style="position:absolute;left:1066.4px;top:757.3px;width:1.4px;height:1.4px;background:rgba(10,25,50,0.800);box-shadow:0.9px 0.9px 0 rgba(140,185,230,0.850);"></div><div style="position:absolute;left:1060px;top:761.35px;width:1.4px;height:1.4px;background:rgba(10,25,50,0.800);box-shadow:0.9px 0.9px 0 rgba(140,185,230,0.850);"></div><div style="position:absolute;left:1063.2px;top:761.35px;width:1.4px;height:1.4px;background:rgba(10,25,50,0.800);box-shadow:0.9px 0.9px 0 rgba(140,185,230,0.850);"></div><div style="position:absolute;left:1066.4px;top:761.35px;width:1.4px;height:1.4px;background:rgba(10,25,50,0.800);box-shadow:0.9px 0.9px 0 rgba(140,185,230,0.850);"></div>
<svg style="position:absolute;left:86px;top:729px" width="40" height="39" viewBox="0 0 40 39"><defs><linearGradient id="ie" x1="0" y1="0" x2="0" y2="1"><stop offset="0" stop-color="#9fe4fc"/><stop offset="0.450" stop-color="#4cc0f4"/><stop offset="1" stop-color="#1c8ce0"/></linearGradient><linearGradient id="ier" x1="0" y1="0" x2="1" y2="0"><stop offset="0" stop-color="#e8b010"/><stop offset="0.500" stop-color="#fce050"/><stop offset="1" stop-color="#e8b818"/></linearGradient></defs><path d="M32.500 5.500C29 2.500 19 6.500 11 15 4.500 22 2.500 29 6 31.500" fill="none" stroke="url(#ier)" stroke-width="2.600" stroke-linecap="round"/><text x="7.300" y="32.300" font-family="Liberation Sans" font-weight="bold" font-size="41" fill="url(#ie)" stroke="url(#ie)" stroke-width="1.700" stroke-linejoin="round" textLength="25.500" lengthAdjust="spacingAndGlyphs">e</text><path d="M6 31.500c2.500 2 7.500 0.300 11.500-2.300" fill="none" stroke="url(#ier)" stroke-width="2.400" stroke-linecap="round"/><path d="M32.500 5.500c1.500 1.500 0.800 4.500-1 7.500" fill="none" stroke="#e8b818" stroke-width="2.200" stroke-linecap="round"/></svg>
<svg style="position:absolute;left:150px;top:733px" width="34" height="32" viewBox="0 0 34 32"><defs><linearGradient id="fold" x1="0" y1="0" x2="0" y2="1"><stop offset="0" stop-color="#fbf0c0"/><stop offset="1" stop-color="#f0d880"/></linearGradient></defs><path d="M1.500 5.500q0-2 2-2h11q2 0 2 2v1h-15z" fill="#f8ecb8" stroke="#d8c070" stroke-width="0.800"/><path d="M9.500 8q0-2 2-2h17q2 0 2 2v2h-21z" fill="#f8ecb8" stroke="#d8c070" stroke-width="0.800"/><rect x="1" y="6" width="31" height="23.500" rx="1.500" fill="url(#fold)" stroke="#d8bc60" stroke-width="0.800"/><path d="M17.500 11q0-2 2-2h10.500q2 0 2 2v3h-14.500z" fill="#fbf2c8" stroke="#d8c070" stroke-width="0.600"/><rect x="4" y="3" width="11" height="2.600" fill="#fff"/><rect x="4.300" y="2.800" width="3.400" height="2.800" fill="#18a838"/><rect x="12" y="5.200" width="13" height="2.600" fill="#fff"/><rect x="12.300" y="5" width="3.400" height="2.800" fill="#d03020"/><rect x="20" y="8.800" width="10" height="2.600" fill="#fff"/><rect x="20.300" y="8.600" width="3.400" height="2.800" fill="#2888e0"/><path d="M5.500 30.500V20q0-2.500 2.500-2.500h18q2.500 0 2.500 2.500v10.500h-6v-7h-11v7z" fill="rgba(190,225,250,0.900)" stroke="#8cc0e8" stroke-width="1"/><path d="M7 19.500h20" stroke="#f4fbff" stroke-width="1.500"/><path d="M8.500 12.500v11M3 18h11" stroke="rgba(255,255,255,0.800)" stroke-width="0.800"/></svg>
<svg style="position:absolute;left:213px;top:735px" width="32" height="28" viewBox="0 0 32 28"><path d="M21 4l6 0.500v20l-6 1z" fill="#b8dcf4" stroke="#8cbce0" stroke-width="0.500"/><path d="M23.500 3.500l1.500 0.200v22l-1.500 0.300z" fill="#d8ecfa"/><path d="M2.500 2.500l21 1.200v20.600l-21 1.400z" fill="#9cc8ec" stroke="#7fb0dc" stroke-width="0.600" opacity="0.950"/><defs><radialGradient id="wm" cx="0.400" cy="0.350" r="0.700"><stop offset="0" stop-color="#fca040"/><stop offset="1" stop-color="#e86410"/></radialGradient></defs><circle cx="13.200" cy="13.900" r="8.800" fill="url(#wm)" stroke="#f8d0a0" stroke-width="0.800"/><path d="M10 8.300v11.200l9.200-5.600z" fill="#fff"/></svg>
<svg style="position:absolute;left:274px;top:732px" width="34" height="33" viewBox="0 0 34 33"><defs><radialGradient id="ffg" cx="0.500" cy="0.300" r="0.650"><stop offset="0" stop-color="#58b8f0"/><stop offset="0.600" stop-color="#1c68c0"/><stop offset="1" stop-color="#123c90"/></radialGradient><linearGradient id="ffo" x1="0" y1="0" x2="1" y2="1"><stop offset="0" stop-color="#f07020"/><stop offset="0.600" stop-color="#e85818"/><stop offset="1" stop-color="#f8a020"/></linearGradient><linearGradient id="ffy" x1="0" y1="0" x2="0" y2="1"><stop offset="0" stop-color="#fff080"/><stop offset="1" stop-color="#f8a818"/></linearGradient></defs><circle cx="18" cy="14" r="12.500" fill="url(#ffg)"/><path d="M29 6.500c3.500 4.500 4 11 1 16.500-3 5.500-9 8.500-15 8-4-0.500-7-2-9-4 6 3 13 2 17.500-2.500 4-4.200 5.500-10 5.500-18z" fill="url(#ffy)"/><path d="M3.500 5.500l1.500 3.500c1-2 2.500-3.300 4.500-4-1.200 1.500-1.600 3-1.300 4.500 1-0.800 2.200-1 3.500-0.800l2.300 3-3.500 1.700c-0.700 2.500 0.500 4.500 3 5 2 0.400 3.700-0.400 5-1.400-0.300 2.600-2 4.400-4.500 5.200 4.500 1 9-1.200 11.500-5.200-0.800 6.500-5 11.500-11.500 13-6 1.200-11.500-1.800-13-8-1.200-4.500-1-10.500 2.500-16.500z" fill="url(#ffo)"/></svg>
<svg style="position:absolute;left:338px;top:732px" width="31" height="32" viewBox="0 0 31 32"><path d="M1.500 0.500h28q1 0 1 1v29q0 1-1 1h-28q-1 0-1-1v-29q0-1 1-1z" fill="#1c44c8" stroke="#1030a0" stroke-width="0.800"/><defs><linearGradient id="mt" x1="0" y1="0" x2="1" y2="1"><stop offset="0" stop-color="#f4f4f8"/><stop offset="0.500" stop-color="#b8bcc8"/><stop offset="1" stop-color="#ececf4"/></linearGradient></defs><rect x="8.500" y="0.500" width="15" height="10" fill="url(#mt)"/><rect x="16.500" y="2" width="4" height="7.500" fill="#1c44c8"/><rect x="3.500" y="14" width="23.500" height="16" fill="#fff"/><rect x="3.500" y="29" width="23.500" height="1.500" fill="#b03030"/><path d="M5 17.500h21M5 21.500h21M5 25.500h10.500" stroke="#b82828" stroke-width="1.100"/><text x="16" y="28.200" font-family="Liberation Mono" font-size="7" fill="#555" font-weight="bold" textLength="10.500" lengthAdjust="spacingAndGlyphs">64·</text><rect x="1.500" y="27.500" width="1.200" height="1.500" fill="#0c2480"/><rect x="28" y="27.500" width="1.200" height="1.500" fill="#0c2480"/></svg>
<div style="position:absolute;left:386px;top:729px;width:59px;height:40px;border:1px solid #14243c;border-bottom:none;border-radius:3px 3px 0 0;box-sizing:border-box;background:linear-gradient(180deg,rgba(255,255,255,0.680),rgba(235,244,252,0.560) 48%,rgba(190,222,248,0.440) 52%,rgba(170,215,250,0.520));box-shadow:inset 0 0 0 1px rgba(255,255,255,0.750);"></div>
<div style="position:absolute;left:399px;top:732px;width:32px;height:32px;background:#fff;"></div>
<svg style="position:absolute;left:399px;top:732px" width="32" height="32" viewBox="0 0 32 32"><path d="M1.500 11.500l2.800 11 2.800-11M9.500 22.500v-11l5.500 11v-11M22.500 22.500v-7.500q0-3.500 2.800-3.500t2.800 3.500v7.500M22.500 18h5.600" fill="none" stroke="#4424c0" stroke-width="1.700" stroke-linejoin="miter"/><path d="M9.800 8.500q0-2.800 3-2.800h6.500v20.300q0 2.800-3 2.800h-3.500q-3 0-3-2.800" fill="none" stroke="#e02468" stroke-width="2.300"/></svg>
<div style="position:absolute;left:448px;top:729px;width:59px;height:40px;border:1px solid #14243c;border-bottom:none;border-radius:3px 3px 0 0;box-sizing:border-box;background:linear-gradient(180deg,rgba(255,255,255,0.420),rgba(220,236,250,0.260) 48%,rgba(150,200,240,0.120) 52%,rgba(150,205,245,0.250));box-shadow:inset 0 0 0 1px rgba(255,255,255,0.450);"></div>
<svg style="position:absolute;left:459px;top:730px" width="36" height="30" viewBox="0 0 36 30"><path d="M3 13C5 5.500 15 1.500 24 4c7 2 9.500 8 7 12.500-1.500 2.500-4.500 1.500-6.500 3-2 1.500 0 4.500-3.500 6-5 2-13 0-16.500-5.500C2 17.500 2.300 15 3 13z" fill="#eca048" stroke="#a86818" stroke-width="0.800"/><ellipse cx="15.500" cy="6" rx="3.300" ry="1.800" fill="#f4e020" transform="rotate(-15 15.500 6)"/><ellipse cx="23" cy="8" rx="3.300" ry="1.900" fill="#187818" transform="rotate(-20 23 8)"/><ellipse cx="26.500" cy="12" rx="3.600" ry="2" fill="#1828c8" transform="rotate(-15 26.500 12)"/><ellipse cx="26" cy="16.500" rx="2.800" ry="1.500" fill="#e02010" transform="rotate(-35 26 16.500)"/><ellipse cx="9.500" cy="17.500" rx="2.800" ry="2.200" fill="#6ab0e0"/><path d="M6.800 16.500q2.500-2.500 5.500-0.500" stroke="#101010" stroke-width="1.600" fill="none"/><ellipse cx="14.500" cy="22" rx="2.600" ry="2" fill="#f4f4f4"/><path d="M2.500 2l17 19" stroke="#3848b0" stroke-width="1.800"/><path d="M3.800 1.500l17 19" stroke="#a0a8e0" stroke-width="0.600"/><path d="M17 17l4.500 5" stroke="#d8d8d8" stroke-width="2.600"/><path d="M20 21l3.500 3.500" stroke="#3a2810" stroke-width="3.200"/></svg>
<span id="t96" style='position:absolute;left:489px;top:755px;font:10px/13px "Liberation Sans",sans-serif;color:#000;white-space:nowrap;will-change:transform;transform-origin:left top;transform:scale(1.0000,1.000);-webkit-text-stroke:0.22px #000;'>7</span>
<span id="t97" style='position:absolute;left:1077px;top:739px;font:12px/15px "Liberation Sans",sans-serif;color:#fff;white-space:nowrap;will-change:transform;transform-origin:left top;transform:scale(0.9225,1.000);-webkit-text-stroke:0.22px #fff;'>HU</span>
<svg style="position:absolute;left:1108px;top:747px" width="9" height="5" viewBox="0 0 9 5"><path d="M0.300 4.500L4.200 0.300 8.200 4.500z" fill="#fff"/></svg>
<svg style="position:absolute;left:1130px;top:741px" width="14" height="16" viewBox="0 0 14 16"><path d="M0.500 1.500l12.800 1v12.300l-12.800-1.300z" fill="#1c8cec"/><path d="M0.500 1.500l12.800 1v2l-12.800-1z" fill="#4cb0ff"/><ellipse cx="6.800" cy="8.300" rx="4.700" ry="4.500" fill="#fff"/><path d="M2.800 8.300l2.700-2v1.300h2.600V6.300l2.700 2-2.700 2V9h-2.600v1.300z" fill="#1c7cd8"/></svg>
<svg style="position:absolute;left:1153px;top:741.5px" width="16" height="15" viewBox="0 0 16 15"><rect x="0.500" y="0.500" width="15" height="10" fill="#0c1428" stroke="#060a14"/><path d="M2 9.500l3-5.500 2 3 2.500-5 3.500 7.500z" fill="#5c9ce8"/><circle cx="5" cy="3.800" r="1.500" fill="#f4f8ff"/><path d="M9 2v5M11 4v4" stroke="#e8f0ff" stroke-width="0.800"/><rect x="6" y="11" width="4" height="1.800" fill="#b0b8c4"/><rect x="3.500" y="12.800" width="9" height="1.300" fill="#d0d6de"/></svg>
<svg style="position:absolute;left:1177px;top:741.5px" width="17" height="15" viewBox="0 0 17 15"><path d="M1.300 0.500v14" stroke="#fff" stroke-width="1.500"/><path d="M2.500 1.300c2.800-1.200 4.600 1 7.200 0.500v4c1.500-1.800 3.500-1.600 6-0.800-1.800 1-3 2.500-5.500 2.800-2.500 0.300-4.500-0.500-7.700 0.200z" fill="#fff"/><path d="M9.700 1.800v4.300" stroke="#1c4474" stroke-width="0.500"/></svg>
<svg style="position:absolute;left:1201px;top:741.5px" width="15" height="15" viewBox="0 0 15 15"><rect x="1" y="2.300" width="7.500" height="11.700" rx="1" fill="none" stroke="#fff" stroke-width="1.500"/><rect x="3" y="0.500" width="3.500" height="1.800" fill="#fff"/><path d="M7 4h6.500v3.500c0 2-1.300 3.300-3.200 3.300S7 9.500 7 7.500z" fill="#fff" stroke="#1c4070" stroke-width="0.600"/><path d="M8.800 0.800v3.200M11.700 0.800v3.200" stroke="#fff" stroke-width="1.400"/><path d="M10.300 10.800v3.400h-3" stroke="#fff" stroke-width="1.300" fill="none"/></svg>
<svg style="position:absolute;left:1225.5px;top:743.5px" width="16" height="11" viewBox="0 0 16 11"><rect x="0" y="8.500" width="2.300" height="2.300" fill="#fff"/><rect x="3.200" y="6.500" width="2.300" height="4.300" fill="#fff"/><rect x="6.400" y="4.500" width="2.300" height="6.300" fill="#fff"/><rect x="9.600" y="2.300" width="2.300" height="8.500" fill="#fff"/><rect x="12.800" y="0.200" width="2.300" height="10.600" fill="#fff"/></svg>
<svg style="position:absolute;left:1251px;top:741.5px" width="14" height="15" viewBox="0 0 14 15"><path d="M0.500 5h2.800l4.300-4.300v13.600L3.300 10H0.500z" fill="#fff"/><path d="M9.600 4.300q2.400 3.200 0 6.400" stroke="#fff" stroke-width="1.100" fill="none"/></svg>
<span id="t98" style='position:absolute;left:1297px;top:734px;font:12px/15px "Liberation Sans",sans-serif;color:#fff;white-space:nowrap;will-change:transform;transform-origin:left top;transform:scale(0.9265,1.000);-webkit-text-stroke:0.22px #fff;'>11:59</span>
<span id="t99" style='position:absolute;left:1283px;top:751px;font:12px/15px "Liberation Sans",sans-serif;color:#fff;white-space:nowrap;will-change:transform;transform-origin:left top;transform:scale(0.8990,1.000);-webkit-text-stroke:0.22px #fff;'>2015.05.03.</span>
<div style="position:absolute;left:1351px;top:729px;width:1px;height:39px;background:#12233a;"></div>
<div style="position:absolute;left:1352px;top:729px;width:13px;height:40px;border:1px solid rgba(200,220,240,0.600);border-bottom:none;box-sizing:border-box;background:linear-gradient(160deg,rgba(255,255,255,0.260),rgba(255,255,255,0.140) 55%,rgba(255,255,255,0.020) 60%,rgba(255,255,255,0.040));"></div>
<div style="position:absolute;left:1365px;top:729px;width:1px;height:39px;background:#12233a;"></div>
</body></html>
